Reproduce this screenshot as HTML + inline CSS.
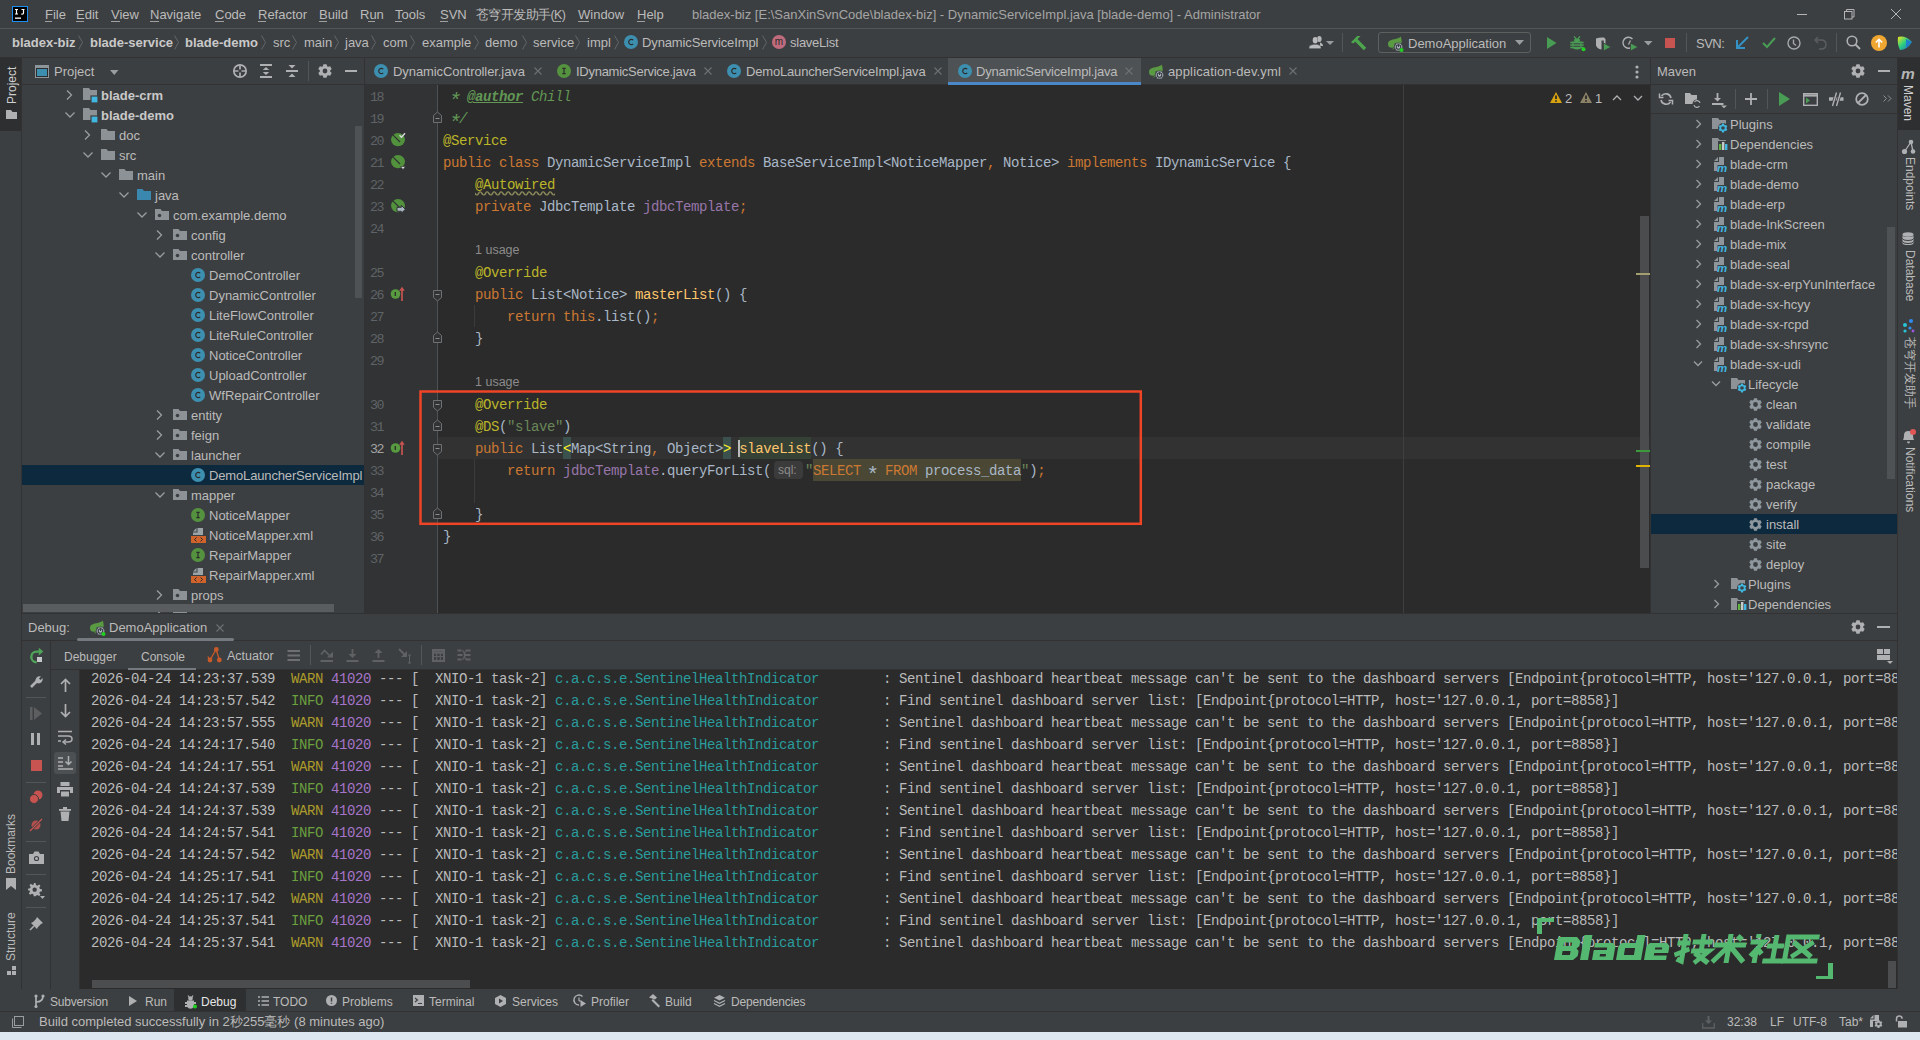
<!DOCTYPE html>
<html><head><meta charset="utf-8"><style>
html,body{margin:0;padding:0;width:1920px;height:1040px;overflow:hidden;background:#3c3f41;}
body div, body span, body svg{position:absolute;}
span{white-space:pre;line-height:1;}
svg{overflow:visible;}
</style></head><body>
<div style="left:0px;top:0px;width:1920px;height:1040px;background:#3c3f41;"></div>
<div style="left:0px;top:28px;width:1920px;height:1px;background:#515658;"></div>
<svg style="left:12px;top:6px;" width="16" height="16" viewBox="0 0 16 16"><rect x="0.5" y="0.5" width="15" height="15" fill="#000" stroke="#1d8ef0" stroke-width="1"/><path d="M3 3.5h3M4.5 3.5v4.5M3 8h3" stroke="#fff" stroke-width="1.2" fill="none"/><path d="M9.5 3.5h3M11.5 3.5v3.5q0 1.2-1.2 1.2h-1" stroke="#fff" stroke-width="1.2" fill="none"/><rect x="3" y="11.5" width="6" height="1.3" fill="#fff"/></svg>
<span style="left:45px;top:8.00px;font-family:'Liberation Sans', sans-serif;font-size:13px;color:#bbbbbb;">File</span>
<span style="left:76px;top:8.00px;font-family:'Liberation Sans', sans-serif;font-size:13px;color:#bbbbbb;">Edit</span>
<span style="left:111px;top:8.00px;font-family:'Liberation Sans', sans-serif;font-size:13px;color:#bbbbbb;">View</span>
<span style="left:150px;top:8.00px;font-family:'Liberation Sans', sans-serif;font-size:13px;color:#bbbbbb;">Navigate</span>
<span style="left:215px;top:8.00px;font-family:'Liberation Sans', sans-serif;font-size:13px;color:#bbbbbb;">Code</span>
<span style="left:258px;top:8.00px;font-family:'Liberation Sans', sans-serif;font-size:13px;color:#bbbbbb;">Refactor</span>
<span style="left:319px;top:8.00px;font-family:'Liberation Sans', sans-serif;font-size:13px;color:#bbbbbb;">Build</span>
<span style="left:360px;top:8.00px;font-family:'Liberation Sans', sans-serif;font-size:13px;color:#bbbbbb;">Run</span>
<span style="left:395px;top:8.00px;font-family:'Liberation Sans', sans-serif;font-size:13px;color:#bbbbbb;">Tools</span>
<span style="left:440px;top:8.00px;font-family:'Liberation Sans', sans-serif;font-size:13px;color:#bbbbbb;">SVN</span>
<div style="left:45px;top:21px;width:7px;height:1px;background:#a0a0a0;"></div>
<div style="left:76px;top:21px;width:8px;height:1px;background:#a0a0a0;"></div>
<div style="left:111px;top:21px;width:9px;height:1px;background:#a0a0a0;"></div>
<div style="left:150px;top:21px;width:9px;height:1px;background:#a0a0a0;"></div>
<div style="left:215px;top:21px;width:9px;height:1px;background:#a0a0a0;"></div>
<div style="left:258px;top:21px;width:8px;height:1px;background:#a0a0a0;"></div>
<div style="left:319px;top:21px;width:8px;height:1px;background:#a0a0a0;"></div>
<div style="left:368px;top:21px;width:7px;height:1px;background:#a0a0a0;"></div>
<div style="left:395px;top:21px;width:7px;height:1px;background:#a0a0a0;"></div>
<div style="left:440px;top:21px;width:8px;height:1px;background:#a0a0a0;"></div>
<span style="left:476px;top:9.42px;font-family:'Liberation Sans', sans-serif;font-size:12.5px;color:#bbbbbb;letter-spacing:-0.6px;">苍穹开发助手(K)</span>
<div style="left:553px;top:21px;width:8px;height:1px;background:#a0a0a0;"></div>
<span style="left:578px;top:8.00px;font-family:'Liberation Sans', sans-serif;font-size:13px;color:#bbbbbb;">Window</span>
<div style="left:578px;top:21px;width:11px;height:1px;background:#a0a0a0;"></div>
<span style="left:637px;top:8.00px;font-family:'Liberation Sans', sans-serif;font-size:13px;color:#bbbbbb;">Help</span>
<div style="left:637px;top:21px;width:8px;height:1px;background:#a0a0a0;"></div>
<span style="left:692px;top:8.00px;font-family:'Liberation Sans', sans-serif;font-size:13px;color:#a5a5a5;">bladex-biz [E:\SanXinSvnCode\bladex-biz] - DynamicServiceImpl.java [blade-demo] - Administrator</span>
<div style="left:1797px;top:14px;width:10px;height:1px;background:#b5b5b5;"></div>
<svg style="left:1843px;top:8px;" width="12" height="12" viewBox="0 0 12 12"><rect x="1.5" y="3.5" width="7.5" height="7.5" fill="none" stroke="#b5b5b5"/><path d="M3.5 3.5v-2h7.5v7.5h-2" fill="none" stroke="#b5b5b5"/></svg>
<svg style="left:1890px;top:8px;" width="12" height="12" viewBox="0 0 12 12"><path d="M1 1L11 11M11 1L1 11" stroke="#b5b5b5" stroke-width="1"/></svg>
<div style="left:0px;top:57px;width:1920px;height:1px;background:#323232;"></div>
<span style="left:12px;top:36.00px;font-family:'Liberation Sans', sans-serif;font-size:13px;color:#c9c9c9;font-weight:bold;">bladex-biz</span>
<span style="left:90px;top:36.00px;font-family:'Liberation Sans', sans-serif;font-size:13px;color:#c9c9c9;font-weight:bold;">blade-service</span>
<span style="left:185px;top:36.00px;font-family:'Liberation Sans', sans-serif;font-size:13px;color:#c9c9c9;font-weight:bold;">blade-demo</span>
<span style="left:273px;top:36.00px;font-family:'Liberation Sans', sans-serif;font-size:13px;color:#bbbbbb;">src</span>
<span style="left:304px;top:36.00px;font-family:'Liberation Sans', sans-serif;font-size:13px;color:#bbbbbb;">main</span>
<span style="left:345px;top:36.00px;font-family:'Liberation Sans', sans-serif;font-size:13px;color:#bbbbbb;">java</span>
<span style="left:383px;top:36.00px;font-family:'Liberation Sans', sans-serif;font-size:13px;color:#bbbbbb;">com</span>
<span style="left:422px;top:36.00px;font-family:'Liberation Sans', sans-serif;font-size:13px;color:#bbbbbb;">example</span>
<span style="left:485px;top:36.00px;font-family:'Liberation Sans', sans-serif;font-size:13px;color:#bbbbbb;">demo</span>
<span style="left:533px;top:36.00px;font-family:'Liberation Sans', sans-serif;font-size:13px;color:#bbbbbb;">service</span>
<span style="left:587px;top:36.00px;font-family:'Liberation Sans', sans-serif;font-size:13px;color:#bbbbbb;">impl</span>
<svg style="left:78px;top:35px;" width="6" height="16" viewBox="0 0 6 16"><path d="M0.5 0.5L4.5 7.5L0.5 14.5" stroke="#62666a" fill="none" stroke-width="1"/></svg>
<svg style="left:174px;top:35px;" width="6" height="16" viewBox="0 0 6 16"><path d="M0.5 0.5L4.5 7.5L0.5 14.5" stroke="#62666a" fill="none" stroke-width="1"/></svg>
<svg style="left:261px;top:35px;" width="6" height="16" viewBox="0 0 6 16"><path d="M0.5 0.5L4.5 7.5L0.5 14.5" stroke="#62666a" fill="none" stroke-width="1"/></svg>
<svg style="left:292px;top:35px;" width="6" height="16" viewBox="0 0 6 16"><path d="M0.5 0.5L4.5 7.5L0.5 14.5" stroke="#62666a" fill="none" stroke-width="1"/></svg>
<svg style="left:334px;top:35px;" width="6" height="16" viewBox="0 0 6 16"><path d="M0.5 0.5L4.5 7.5L0.5 14.5" stroke="#62666a" fill="none" stroke-width="1"/></svg>
<svg style="left:371px;top:35px;" width="6" height="16" viewBox="0 0 6 16"><path d="M0.5 0.5L4.5 7.5L0.5 14.5" stroke="#62666a" fill="none" stroke-width="1"/></svg>
<svg style="left:410px;top:35px;" width="6" height="16" viewBox="0 0 6 16"><path d="M0.5 0.5L4.5 7.5L0.5 14.5" stroke="#62666a" fill="none" stroke-width="1"/></svg>
<svg style="left:474px;top:35px;" width="6" height="16" viewBox="0 0 6 16"><path d="M0.5 0.5L4.5 7.5L0.5 14.5" stroke="#62666a" fill="none" stroke-width="1"/></svg>
<svg style="left:522px;top:35px;" width="6" height="16" viewBox="0 0 6 16"><path d="M0.5 0.5L4.5 7.5L0.5 14.5" stroke="#62666a" fill="none" stroke-width="1"/></svg>
<svg style="left:575px;top:35px;" width="6" height="16" viewBox="0 0 6 16"><path d="M0.5 0.5L4.5 7.5L0.5 14.5" stroke="#62666a" fill="none" stroke-width="1"/></svg>
<svg style="left:614px;top:35px;" width="6" height="16" viewBox="0 0 6 16"><path d="M0.5 0.5L4.5 7.5L0.5 14.5" stroke="#62666a" fill="none" stroke-width="1"/></svg>
<svg style="left:762px;top:35px;" width="6" height="16" viewBox="0 0 6 16"><path d="M0.5 0.5L4.5 7.5L0.5 14.5" stroke="#62666a" fill="none" stroke-width="1"/></svg>
<svg style="left:624px;top:35px;" width="14" height="14" viewBox="0 0 14 14"><circle cx="7" cy="7" r="7" fill="#3d8fb0"/><path d="M9.2 5.2A2.6 2.6 0 1 0 9.2 8.8" stroke="#2b2b2b" stroke-width="1.2" fill="none"/></svg>
<span style="left:642px;top:36.00px;font-family:'Liberation Sans', sans-serif;font-size:13px;color:#bbbbbb;letter-spacing:-0.12px;">DynamicServiceImpl</span>
<svg style="left:772px;top:35px;" width="14" height="14" viewBox="0 0 14 14"><circle cx="7" cy="7" r="7" fill="#c06b7d"/><text x="7" y="10.3" text-anchor="middle" font-family="Liberation Sans" font-size="10" fill="#2b2b2b">m</text></svg>
<span style="left:790px;top:36.00px;font-family:'Liberation Sans', sans-serif;font-size:13px;color:#bbbbbb;letter-spacing:-0.25px;">slaveList</span>
<svg style="left:1308px;top:35px;" width="17" height="15" viewBox="0 0 17 15"><ellipse cx="11.3" cy="4" rx="2.3" ry="3" fill="#b4b6b8"/><path d="M12 7.5Q15 8.5 15 11L12 11z" fill="#b4b6b8"/><ellipse cx="7.2" cy="5.5" rx="2.8" ry="3.4" fill="#3c3f41"/><ellipse cx="7.2" cy="5.3" rx="2.5" ry="3.2" fill="#b9bbbd"/><path d="M1 13.8V12Q1 10 5.5 9.3H9Q13 10 13 12V13.8Z" fill="#b9bbbd" stroke="#3c3f41" stroke-width="0.6"/></svg>
<svg style="left:1326px;top:41px;" width="8" height="5" viewBox="0 0 8 5"><path d="M0 0h8L4 4z" fill="#9a9da0"/></svg>
<div style="left:1342px;top:33px;width:1px;height:19px;background:#515658;"></div>
<svg style="left:1350px;top:34px;" width="17" height="17" viewBox="0 0 17 17"><path d="M1 8.2L7.2 2H10.5L3.3 9.5Z" fill="#4da64d"/><path d="M5.5 5.5L15 15" stroke="#4da64d" stroke-width="3.3"/></svg>
<div style="left:1378px;top:32px;width:153px;height:21px;border:1px solid #5e6060;border-radius:3px;box-sizing:border-box;"></div>
<svg style="left:1388px;top:36px;" width="16" height="16" viewBox="0 0 16 16"><path d="M0 8C0 4.5 3.5 3.5 7.5 3C10 2.6 11.5 1.8 12.6 0.5C13.6 2.5 13.8 5 13.6 7H6.8L5.8 11.6C2.5 12.2 0 11.5 0 8Z" fill="#5a9a43"/><path d="M3.5 13.5L6 11.8L6.3 13z" fill="#4f8a3b"/><path d="M15 11L12.75 14.9H8.25L6 11L8.25 7.1H12.75Z" fill="#a9b4bd" stroke="#3c3f41" stroke-width="0.8"/><circle cx="10.5" cy="11" r="2.3" fill="none" stroke="#3a3d40" stroke-width="1.1"/><path d="M10.5 8.3V11" stroke="#3a3d40" stroke-width="1.1"/><circle cx="13.5" cy="14" r="2" fill="#21d121"/></svg>
<span style="left:1408px;top:37.00px;font-family:'Liberation Sans', sans-serif;font-size:13px;color:#bbbbbb;">DemoApplication</span>
<svg style="left:1515px;top:40px;" width="9" height="6" viewBox="0 0 9 6"><path d="M0 0h9L4.5 5z" fill="#9a9da0"/></svg>
<svg style="left:1547px;top:37px;" width="10" height="12" viewBox="0 0 10 12"><path d="M0 0L9.5 6L0 12z" fill="#499c54"/></svg>
<svg style="left:1570px;top:36px;" width="16" height="16" viewBox="0 0 16 16"><path d="M4 0.5L6.3 3M10 0.5L7.7 3" stroke="#499c54" stroke-width="1.3"/><ellipse cx="7" cy="4.2" rx="3" ry="1.8" fill="#499c54"/><path d="M2.5 5.5H11.5V10.5Q11.5 13.5 7 13.5Q2.5 13.5 2.5 10.5Z" fill="#499c54"/><path d="M0.3 6.5H13.7M0.3 9H13.7M0.3 11.5H13.7" stroke="#499c54" stroke-width="1.3"/><path d="M3.5 7.8H10.5M3.5 10.3H10.5" stroke="#3c3f41" stroke-width="1"/><circle cx="13.5" cy="13.3" r="2" fill="#21d121"/></svg>
<svg style="left:1595px;top:37px;" width="17" height="15" viewBox="0 0 17 15"><path d="M1 1.5Q5 0 9 0.5L10.5 2V7.5Q10.5 11 6 12.5Q1 11 1 7.5Z" fill="#aeb0b2"/><path d="M6.5 3.5H8.8V12L6.5 12.8Z" fill="#3c3f41"/><path d="M8.5 6L16 10L8.5 14Z" fill="#499c54" stroke="#3c3f41" stroke-width="0.8"/></svg>
<svg style="left:1622px;top:36px;" width="18" height="16" viewBox="0 0 18 16"><path d="M11.5 9A5.5 5.5 0 1 1 10.5 3" stroke="#aeb0b2" stroke-width="1.4" fill="none"/><path d="M6.5 8.5L8.5 4.5" stroke="#aeb0b2" stroke-width="1.2"/><path d="M8.5 7L16 11L8.5 15Z" fill="#499c54" stroke="#3c3f41" stroke-width="0.8"/></svg>
<svg style="left:1644px;top:41px;" width="9" height="6" viewBox="0 0 9 6"><path d="M0 0h8.5L4.25 4.5z" fill="#9a9da0"/></svg>
<div style="left:1665px;top:38px;width:10px;height:10px;background:#c75450;"></div>
<div style="left:1686px;top:33px;width:1px;height:19px;background:#515658;"></div>
<span style="left:1696px;top:37.00px;font-family:'Liberation Sans', sans-serif;font-size:13px;color:#bbbbbb;letter-spacing:-0.5px;">SVN:</span>
<svg style="left:1736px;top:36px;" width="13" height="13" viewBox="0 0 13 13"><path d="M12 1L2 11" stroke="#3592c4" stroke-width="2"/><path d="M1 4v8h8" stroke="#3592c4" stroke-width="2" fill="none"/></svg>
<svg style="left:1762px;top:37px;" width="14" height="11" viewBox="0 0 14 11"><path d="M1 6l4 4l8-9" stroke="#499c54" stroke-width="2" fill="none"/></svg>
<svg style="left:1787px;top:36px;" width="14" height="14" viewBox="0 0 14 14"><circle cx="7" cy="7" r="6" fill="none" stroke="#a6a8aa" stroke-width="1.4"/><path d="M6.5 3.5v4l2.5 2" stroke="#a6a8aa" stroke-width="1.4" fill="none"/></svg>
<svg style="left:1814px;top:36px;" width="13" height="13" viewBox="0 0 13 13"><path d="M4 1L1 4l3 3" stroke="#5c5e60" stroke-width="1.4" fill="none"/><path d="M1 4h6q5 0 5 4.5q0 4.5-5 4.5h-2" stroke="#5c5e60" stroke-width="1.4" fill="none"/></svg>
<div style="left:1836px;top:33px;width:1px;height:19px;background:#515658;"></div>
<svg style="left:1846px;top:35px;" width="15" height="15" viewBox="0 0 15 15"><circle cx="6" cy="6" r="4.8" fill="none" stroke="#aeb0b2" stroke-width="1.6"/><path d="M9.5 9.5l4.5 4.5" stroke="#aeb0b2" stroke-width="1.8"/></svg>
<svg style="left:1871px;top:35px;" width="17" height="17" viewBox="0 0 17 17"><circle cx="8" cy="8" r="8" fill="#f0a732"/><path d="M8 12.5V4.5M4.8 7.5L8 4.3l3.2 3.2" stroke="#fff" stroke-width="1.6" fill="none"/></svg>
<svg style="left:1897px;top:35px;" width="16" height="16" viewBox="0 0 16 16"><defs><linearGradient id="cg" x1="0" y1="0" x2="1" y2="1"><stop offset="0" stop-color="#f7e51b"/><stop offset="0.45" stop-color="#2ed07e"/><stop offset="1" stop-color="#1a63d8"/></linearGradient></defs><path d="M1 2Q8 0 15 7Q10 15 3 15Q0 9 1 2z" fill="url(#cg)"/><path d="M9 4L15 7L9 13z" fill="#1e6fd9" opacity="0.8"/></svg>
<div style="left:21px;top:57px;width:1px;height:932px;background:#323232;"></div>
<div style="left:0px;top:58px;width:21px;height:73px;background:#2d2f30;"></div>
<span style="left:6px;top:104px;font-family:'Liberation Sans', sans-serif;font-size:12px;color:#d0d0d0;transform:rotate(-90deg);transform-origin:0 0;">Project</span>
<svg style="left:6px;top:110px;" width="11" height="9" viewBox="0 0 11 9"><path d="M0 0h5l1.5 2H11v7H0z" fill="#aeb0b2"/></svg>
<span style="left:5px;top:874px;font-family:'Liberation Sans', sans-serif;font-size:12px;color:#bbbbbb;transform:rotate(-90deg);transform-origin:0 0;">Bookmarks</span>
<svg style="left:6px;top:878px;" width="10" height="12" viewBox="0 0 10 12"><path d="M0 0h10v12L5 8L0 12z" fill="#aeb0b2"/></svg>
<span style="left:5px;top:961px;font-family:'Liberation Sans', sans-serif;font-size:12px;color:#bbbbbb;transform:rotate(-90deg);transform-origin:0 0;">Structure</span>
<svg style="left:7px;top:966px;" width="11" height="11" viewBox="0 0 11 11"><rect x="5" y="0" width="4" height="4" fill="#aeb0b2"/><rect x="0" y="5" width="4" height="4" fill="#aeb0b2"/><rect x="5" y="5" width="4" height="4" fill="#aeb0b2"/></svg>
<div style="left:1897px;top:57px;width:1px;height:932px;background:#323232;"></div>
<div style="left:1898px;top:58px;width:22px;height:72px;background:#2d2f30;"></div>
<span style="left:1914px;top:85px;font-family:'Liberation Sans', sans-serif;font-size:12px;color:#d0d0d0;transform:rotate(90deg);transform-origin:0 0;">Maven</span>
<span style="left:1901px;top:65.88px;font-family:'Liberation Sans', sans-serif;font-size:15.5px;color:#b4b4b4;font-weight:bold;font-style:italic;">m</span>
<svg style="left:1901px;top:139px;" width="15" height="16" viewBox="0 0 15 16"><path d="M10 3L3.5 12.5M10 3L12 12.5" stroke="#aeb0b2" stroke-width="1.3"/><circle cx="10" cy="3" r="2.3" fill="#aeb0b2"/><circle cx="3.5" cy="12.5" r="2.6" fill="#aeb0b2"/><circle cx="12" cy="12.5" r="2.3" fill="#aeb0b2"/></svg>
<span style="left:1916px;top:157px;font-family:'Liberation Sans', sans-serif;font-size:12px;color:#bbbbbb;transform:rotate(90deg);transform-origin:0 0;">Endpoints</span>
<svg style="left:1902px;top:232px;" width="12" height="13" viewBox="0 0 12 13"><ellipse cx="6" cy="2.5" rx="5.5" ry="2.3" fill="#aeb0b2"/><path d="M0.5 3v8q0 2 5.5 2q5.5 0 5.5-2V3q0 2-5.5 2q-5.5 0-5.5-2z" fill="#aeb0b2"/><path d="M0.5 6.5q0 2 5.5 2q5.5 0 5.5-2M0.5 9.5q0 2 5.5 2q5.5 0 5.5-2" stroke="#3c3f41" fill="none"/></svg>
<span style="left:1916px;top:250px;font-family:'Liberation Sans', sans-serif;font-size:12px;color:#bbbbbb;transform:rotate(90deg);transform-origin:0 0;">Database</span>
<svg style="left:1901px;top:319px;" width="14" height="14" viewBox="0 0 14 14"><circle cx="10" cy="2" r="2" fill="#2f8cf0"/><circle cx="4" cy="6" r="2" fill="#27c3d6"/><circle cx="9" cy="9" r="1.6" fill="#2f8cf0"/><circle cx="4" cy="12" r="1.6" fill="#27c3d6"/><circle cx="12" cy="12" r="1.4" fill="#a056e0"/></svg>
<span style="left:1916px;top:337px;font-family:'Liberation Sans', sans-serif;font-size:12px;color:#bbbbbb;transform:rotate(90deg);transform-origin:0 0;">苍穹开发助手</span>
<svg style="left:1901px;top:429px;" width="15" height="15" viewBox="0 0 15 15"><path d="M2 11q1-1 1-5q0-4 4.5-4q4.5 0 4.5 4q0 4 1 5z" fill="#aeb0b2"/><path d="M6 12.5h3q0 2-1.5 2q-1.5 0-1.5-2z" fill="#aeb0b2"/><circle cx="12" cy="3" r="3" fill="#e05555"/></svg>
<span style="left:1916px;top:447px;font-family:'Liberation Sans', sans-serif;font-size:12px;color:#bbbbbb;transform:rotate(90deg);transform-origin:0 0;">Notifications</span>
<div style="left:364px;top:57px;width:1px;height:557px;background:#323232;"></div>
<div style="left:22px;top:84px;width:342px;height:1px;background:#323232;"></div>
<svg style="left:35px;top:65px;" width="14" height="13" viewBox="0 0 14 13"><rect x="0" y="0" width="14" height="13" fill="#8b959a"/><rect x="1" y="3" width="12" height="9" fill="#2b2d2e"/><rect x="2" y="4" width="10" height="7" fill="#3d8fb0"/></svg>
<span style="left:54px;top:65.00px;font-family:'Liberation Sans', sans-serif;font-size:13px;color:#bbbbbb;">Project</span>
<svg style="left:110px;top:70px;" width="9" height="6" viewBox="0 0 9 6"><path d="M0 0h8.5L4.25 5z" fill="#9a9da0"/></svg>
<svg style="left:233px;top:64px;" width="15" height="15" viewBox="0 0 15 15"><circle cx="7" cy="7" r="6.2" fill="none" stroke="#aeb0b2" stroke-width="1.7"/><path d="M7 1v4.5M7 8.5V13M1 7h4.5M8.5 7H13" stroke="#aeb0b2" stroke-width="1.7"/></svg>
<svg style="left:260px;top:64px;" width="13" height="15" viewBox="0 0 13 15"><path d="M0 1h12M0 13h12" stroke="#aeb0b2" stroke-width="2"/><path d="M2.8 6L6 3L9.2 6zM2.8 8L6 11L9.2 8z" fill="#aeb0b2"/></svg>
<svg style="left:286px;top:64px;" width="13" height="14" viewBox="0 0 13 14"><path d="M0 7h12" stroke="#aeb0b2" stroke-width="2"/><path d="M2.5 1H9.5L6 4.5zM2.5 13H9.5L6 9.5z" fill="#aeb0b2"/></svg>
<div style="left:308px;top:61px;width:1px;height:20px;background:#515658;"></div>
<svg style="left:318px;top:64px;" width="14" height="14" viewBox="0 0 14 14"><path fill-rule="evenodd" d="M4.89 2.27L5.43 0.18L8.57 0.18L9.11 2.27L10.04 2.81L12.12 2.23L13.69 4.95L12.15 6.46L12.15 7.54L13.69 9.05L12.12 11.77L10.04 11.19L9.11 11.73L8.57 13.82L5.43 13.82L4.89 11.73L3.96 11.19L1.88 11.77L0.31 9.05L1.85 7.54L1.85 6.46L0.31 4.95L1.88 2.23L3.96 2.81Z M9.38 7.00A2.38 2.38 0 1 0 4.62 7.00A2.38 2.38 0 1 0 9.38 7.00Z" fill="#aeb0b2"/></svg>
<div style="left:345px;top:70px;width:12px;height:2px;background:#aeb0b2;"></div>
<div style="left:22px;top:85px;width:342px;height:528px;overflow:hidden;">
<svg style="left:44px;top:5px;" width="7" height="10" viewBox="0 0 7 10"><path d="M1 0.5L5.5 5L1 9.5" stroke="#9a9da0" stroke-width="1.3" fill="none"/></svg><svg style="left:61px;top:3px;" width="15" height="15" viewBox="0 0 15 15"><path d="M0 0h6l1.5 2H14v10H0z" fill="#8d9296"/><rect x="8" y="8" width="7" height="7" fill="#40b6e0" stroke="#3c3f41" stroke-width="1.2"/></svg><span style="left:79px;top:4.00px;font-family:'Liberation Sans', sans-serif;font-size:13px;color:#c9c9c9;font-weight:bold;">blade-crm</span><svg style="left:43px;top:27px;" width="10" height="6" viewBox="0 0 10 6"><path d="M0.5 0.5L5 5L9.5 0.5" stroke="#9a9da0" stroke-width="1.3" fill="none"/></svg><svg style="left:61px;top:23px;" width="15" height="15" viewBox="0 0 15 15"><path d="M0 0h6l1.5 2H14v10H0z" fill="#8d9296"/><rect x="8" y="8" width="7" height="7" fill="#40b6e0" stroke="#3c3f41" stroke-width="1.2"/></svg><span style="left:79px;top:24.00px;font-family:'Liberation Sans', sans-serif;font-size:13px;color:#c9c9c9;font-weight:bold;">blade-demo</span><svg style="left:62px;top:45px;" width="7" height="10" viewBox="0 0 7 10"><path d="M1 0.5L5.5 5L1 9.5" stroke="#9a9da0" stroke-width="1.3" fill="none"/></svg><svg style="left:79px;top:44px;" width="15" height="12" viewBox="0 0 15 12"><path d="M0 0h5.5l1.5 2H14v9H0z" fill="#8d9296"/></svg><span style="left:97px;top:44.00px;font-family:'Liberation Sans', sans-serif;font-size:13px;color:#bbbbbb;">doc</span><svg style="left:61px;top:67px;" width="10" height="6" viewBox="0 0 10 6"><path d="M0.5 0.5L5 5L9.5 0.5" stroke="#9a9da0" stroke-width="1.3" fill="none"/></svg><svg style="left:79px;top:64px;" width="15" height="12" viewBox="0 0 15 12"><path d="M0 0h5.5l1.5 2H14v9H0z" fill="#8d9296"/></svg><span style="left:97px;top:64.00px;font-family:'Liberation Sans', sans-serif;font-size:13px;color:#bbbbbb;">src</span><svg style="left:79px;top:87px;" width="10" height="6" viewBox="0 0 10 6"><path d="M0.5 0.5L5 5L9.5 0.5" stroke="#9a9da0" stroke-width="1.3" fill="none"/></svg><svg style="left:97px;top:84px;" width="15" height="12" viewBox="0 0 15 12"><path d="M0 0h5.5l1.5 2H14v9H0z" fill="#8d9296"/></svg><span style="left:115px;top:84.00px;font-family:'Liberation Sans', sans-serif;font-size:13px;color:#bbbbbb;">main</span><svg style="left:97px;top:107px;" width="10" height="6" viewBox="0 0 10 6"><path d="M0.5 0.5L5 5L9.5 0.5" stroke="#9a9da0" stroke-width="1.3" fill="none"/></svg><svg style="left:115px;top:104px;" width="15" height="12" viewBox="0 0 15 12"><path d="M0 0h5.5l1.5 2H14v9H0z" fill="#3a87b0"/></svg><span style="left:133px;top:104.00px;font-family:'Liberation Sans', sans-serif;font-size:13px;color:#bbbbbb;">java</span><svg style="left:115px;top:127px;" width="10" height="6" viewBox="0 0 10 6"><path d="M0.5 0.5L5 5L9.5 0.5" stroke="#9a9da0" stroke-width="1.3" fill="none"/></svg><svg style="left:133px;top:124px;" width="15" height="12" viewBox="0 0 15 12"><path d="M0 0h5.5l1.5 2H14v9H0z" fill="#8d9296"/><circle cx="4.5" cy="6.5" r="1.8" fill="#3c3f41"/></svg><span style="left:151px;top:124.00px;font-family:'Liberation Sans', sans-serif;font-size:13px;color:#bbbbbb;">com.example.demo</span><svg style="left:134px;top:145px;" width="7" height="10" viewBox="0 0 7 10"><path d="M1 0.5L5.5 5L1 9.5" stroke="#9a9da0" stroke-width="1.3" fill="none"/></svg><svg style="left:151px;top:144px;" width="15" height="12" viewBox="0 0 15 12"><path d="M0 0h5.5l1.5 2H14v9H0z" fill="#8d9296"/><circle cx="4.5" cy="6.5" r="1.8" fill="#3c3f41"/></svg><span style="left:169px;top:144.00px;font-family:'Liberation Sans', sans-serif;font-size:13px;color:#bbbbbb;">config</span><svg style="left:133px;top:167px;" width="10" height="6" viewBox="0 0 10 6"><path d="M0.5 0.5L5 5L9.5 0.5" stroke="#9a9da0" stroke-width="1.3" fill="none"/></svg><svg style="left:151px;top:164px;" width="15" height="12" viewBox="0 0 15 12"><path d="M0 0h5.5l1.5 2H14v9H0z" fill="#8d9296"/><circle cx="4.5" cy="6.5" r="1.8" fill="#3c3f41"/></svg><span style="left:169px;top:164.00px;font-family:'Liberation Sans', sans-serif;font-size:13px;color:#bbbbbb;">controller</span><svg style="left:169px;top:183px;" width="14" height="14" viewBox="0 0 14 14"><circle cx="7" cy="7" r="7" fill="#3d8fb0"/><path d="M9.2 5.2A2.6 2.6 0 1 0 9.2 8.8" stroke="#2b2b2b" stroke-width="1.2" fill="none"/></svg><span style="left:187px;top:184.00px;font-family:'Liberation Sans', sans-serif;font-size:13px;color:#bbbbbb;">DemoController</span><svg style="left:169px;top:203px;" width="14" height="14" viewBox="0 0 14 14"><circle cx="7" cy="7" r="7" fill="#3d8fb0"/><path d="M9.2 5.2A2.6 2.6 0 1 0 9.2 8.8" stroke="#2b2b2b" stroke-width="1.2" fill="none"/></svg><span style="left:187px;top:204.00px;font-family:'Liberation Sans', sans-serif;font-size:13px;color:#bbbbbb;">DynamicController</span><svg style="left:169px;top:223px;" width="14" height="14" viewBox="0 0 14 14"><circle cx="7" cy="7" r="7" fill="#3d8fb0"/><path d="M9.2 5.2A2.6 2.6 0 1 0 9.2 8.8" stroke="#2b2b2b" stroke-width="1.2" fill="none"/></svg><span style="left:187px;top:224.00px;font-family:'Liberation Sans', sans-serif;font-size:13px;color:#bbbbbb;">LiteFlowController</span><svg style="left:169px;top:243px;" width="14" height="14" viewBox="0 0 14 14"><circle cx="7" cy="7" r="7" fill="#3d8fb0"/><path d="M9.2 5.2A2.6 2.6 0 1 0 9.2 8.8" stroke="#2b2b2b" stroke-width="1.2" fill="none"/></svg><span style="left:187px;top:244.00px;font-family:'Liberation Sans', sans-serif;font-size:13px;color:#bbbbbb;">LiteRuleController</span><svg style="left:169px;top:263px;" width="14" height="14" viewBox="0 0 14 14"><circle cx="7" cy="7" r="7" fill="#3d8fb0"/><path d="M9.2 5.2A2.6 2.6 0 1 0 9.2 8.8" stroke="#2b2b2b" stroke-width="1.2" fill="none"/></svg><span style="left:187px;top:264.00px;font-family:'Liberation Sans', sans-serif;font-size:13px;color:#bbbbbb;">NoticeController</span><svg style="left:169px;top:283px;" width="14" height="14" viewBox="0 0 14 14"><circle cx="7" cy="7" r="7" fill="#3d8fb0"/><path d="M9.2 5.2A2.6 2.6 0 1 0 9.2 8.8" stroke="#2b2b2b" stroke-width="1.2" fill="none"/></svg><span style="left:187px;top:284.00px;font-family:'Liberation Sans', sans-serif;font-size:13px;color:#bbbbbb;">UploadController</span><svg style="left:169px;top:303px;" width="14" height="14" viewBox="0 0 14 14"><circle cx="7" cy="7" r="7" fill="#3d8fb0"/><path d="M9.2 5.2A2.6 2.6 0 1 0 9.2 8.8" stroke="#2b2b2b" stroke-width="1.2" fill="none"/></svg><span style="left:187px;top:304.00px;font-family:'Liberation Sans', sans-serif;font-size:13px;color:#bbbbbb;">WfRepairController</span><svg style="left:134px;top:325px;" width="7" height="10" viewBox="0 0 7 10"><path d="M1 0.5L5.5 5L1 9.5" stroke="#9a9da0" stroke-width="1.3" fill="none"/></svg><svg style="left:151px;top:324px;" width="15" height="12" viewBox="0 0 15 12"><path d="M0 0h5.5l1.5 2H14v9H0z" fill="#8d9296"/><circle cx="4.5" cy="6.5" r="1.8" fill="#3c3f41"/></svg><span style="left:169px;top:324.00px;font-family:'Liberation Sans', sans-serif;font-size:13px;color:#bbbbbb;">entity</span><svg style="left:134px;top:345px;" width="7" height="10" viewBox="0 0 7 10"><path d="M1 0.5L5.5 5L1 9.5" stroke="#9a9da0" stroke-width="1.3" fill="none"/></svg><svg style="left:151px;top:344px;" width="15" height="12" viewBox="0 0 15 12"><path d="M0 0h5.5l1.5 2H14v9H0z" fill="#8d9296"/><circle cx="4.5" cy="6.5" r="1.8" fill="#3c3f41"/></svg><span style="left:169px;top:344.00px;font-family:'Liberation Sans', sans-serif;font-size:13px;color:#bbbbbb;">feign</span><svg style="left:133px;top:367px;" width="10" height="6" viewBox="0 0 10 6"><path d="M0.5 0.5L5 5L9.5 0.5" stroke="#9a9da0" stroke-width="1.3" fill="none"/></svg><svg style="left:151px;top:364px;" width="15" height="12" viewBox="0 0 15 12"><path d="M0 0h5.5l1.5 2H14v9H0z" fill="#8d9296"/><circle cx="4.5" cy="6.5" r="1.8" fill="#3c3f41"/></svg><span style="left:169px;top:364.00px;font-family:'Liberation Sans', sans-serif;font-size:13px;color:#bbbbbb;">launcher</span><div style="left:0px;top:380px;width:342px;height:20px;background:#0d293e;"></div><svg style="left:169px;top:383px;" width="14" height="14" viewBox="0 0 14 14"><circle cx="7" cy="7" r="7" fill="#3d8fb0"/><path d="M9.2 5.2A2.6 2.6 0 1 0 9.2 8.8" stroke="#2b2b2b" stroke-width="1.2" fill="none"/></svg><span style="left:187px;top:384.00px;font-family:'Liberation Sans', sans-serif;font-size:13px;color:#bbbbbb;letter-spacing:-0.15px;">DemoLauncherServiceImpl</span><svg style="left:133px;top:407px;" width="10" height="6" viewBox="0 0 10 6"><path d="M0.5 0.5L5 5L9.5 0.5" stroke="#9a9da0" stroke-width="1.3" fill="none"/></svg><svg style="left:151px;top:404px;" width="15" height="12" viewBox="0 0 15 12"><path d="M0 0h5.5l1.5 2H14v9H0z" fill="#8d9296"/><circle cx="4.5" cy="6.5" r="1.8" fill="#3c3f41"/></svg><span style="left:169px;top:404.00px;font-family:'Liberation Sans', sans-serif;font-size:13px;color:#bbbbbb;">mapper</span><svg style="left:169px;top:423px;" width="14" height="14" viewBox="0 0 14 14"><circle cx="7" cy="7" r="7" fill="#55923f"/><path d="M5.3 4.3h3.4M7 4.3v5.4M5.3 9.7h3.4" stroke="#2b2b2b" stroke-width="1.2" fill="none"/></svg><span style="left:187px;top:424.00px;font-family:'Liberation Sans', sans-serif;font-size:13px;color:#bbbbbb;">NoticeMapper</span><svg style="left:169px;top:443px;" width="15" height="15" viewBox="0 0 15 15"><path d="M2 3.5L5.5 0V3.5z" fill="#9aa3a8"/><path d="M6.5 0H12V7H2V4.5H6.5z" fill="#9aa3a8"/><rect x="0" y="8" width="15" height="7" fill="#d0632b"/><path d="M5.5 9.5L3.5 11.5L5.5 13.5M9.5 9.5L11.5 11.5L9.5 13.5" stroke="#2b2b2b" stroke-width="1" fill="none"/></svg><span style="left:187px;top:444.00px;font-family:'Liberation Sans', sans-serif;font-size:13px;color:#bbbbbb;">NoticeMapper.xml</span><svg style="left:169px;top:463px;" width="14" height="14" viewBox="0 0 14 14"><circle cx="7" cy="7" r="7" fill="#55923f"/><path d="M5.3 4.3h3.4M7 4.3v5.4M5.3 9.7h3.4" stroke="#2b2b2b" stroke-width="1.2" fill="none"/></svg><span style="left:187px;top:464.00px;font-family:'Liberation Sans', sans-serif;font-size:13px;color:#bbbbbb;">RepairMapper</span><svg style="left:169px;top:483px;" width="15" height="15" viewBox="0 0 15 15"><path d="M2 3.5L5.5 0V3.5z" fill="#9aa3a8"/><path d="M6.5 0H12V7H2V4.5H6.5z" fill="#9aa3a8"/><rect x="0" y="8" width="15" height="7" fill="#d0632b"/><path d="M5.5 9.5L3.5 11.5L5.5 13.5M9.5 9.5L11.5 11.5L9.5 13.5" stroke="#2b2b2b" stroke-width="1" fill="none"/></svg><span style="left:187px;top:484.00px;font-family:'Liberation Sans', sans-serif;font-size:13px;color:#bbbbbb;">RepairMapper.xml</span><svg style="left:134px;top:505px;" width="7" height="10" viewBox="0 0 7 10"><path d="M1 0.5L5.5 5L1 9.5" stroke="#9a9da0" stroke-width="1.3" fill="none"/></svg><svg style="left:151px;top:504px;" width="15" height="12" viewBox="0 0 15 12"><path d="M0 0h5.5l1.5 2H14v9H0z" fill="#8d9296"/><circle cx="4.5" cy="6.5" r="1.8" fill="#3c3f41"/></svg><span style="left:169px;top:504.00px;font-family:'Liberation Sans', sans-serif;font-size:13px;color:#bbbbbb;">props</span><svg style="left:134px;top:525px;" width="7" height="10" viewBox="0 0 7 10"><path d="M1 0.5L5.5 5L1 9.5" stroke="#9a9da0" stroke-width="1.3" fill="none"/></svg><svg style="left:151px;top:524px;" width="15" height="12" viewBox="0 0 15 12"><path d="M0 0h5.5l1.5 2H14v9H0z" fill="#8d9296"/><circle cx="4.5" cy="6.5" r="1.8" fill="#3c3f41"/></svg><span style="left:169px;top:524.00px;font-family:'Liberation Sans', sans-serif;font-size:13px;color:#bbbbbb;">rpc</span><div style="left:333px;top:41px;width:7px;height:172px;background:#4f5254;border-radius:0"></div>
</div>
<div style="left:23px;top:604px;width:311px;height:8px;background:#5a5d5f;"></div>
<div style="left:22px;top:613px;width:1876px;height:1px;background:#323232;"></div>
<div style="left:1650px;top:57px;width:1px;height:557px;background:#323232;"></div>
<div style="left:365px;top:84px;width:1285px;height:1px;background:#323232;"></div>
<div style="left:948px;top:58px;width:193px;height:24px;background:#4e5254;"></div>
<div style="left:948px;top:82px;width:193px;height:3px;background:#4a88c7;"></div>
<svg style="left:374px;top:64px;" width="14" height="14" viewBox="0 0 14 14"><circle cx="7" cy="7" r="7" fill="#3d8fb0"/><path d="M9.2 5.2A2.6 2.6 0 1 0 9.2 8.8" stroke="#2b2b2b" stroke-width="1.2" fill="none"/></svg>
<span style="left:393px;top:65.00px;font-family:'Liberation Sans', sans-serif;font-size:13px;color:#bbbbbb;letter-spacing:-0.08px;">DynamicController.java</span>
<svg style="left:534px;top:67px;" width="8" height="8" viewBox="0 0 8 8"><path d="M0.5 0.5L7.5 7.5M7.5 0.5L0.5 7.5" stroke="#6e7173" stroke-width="1.1"/></svg>
<svg style="left:557px;top:64px;" width="14" height="14" viewBox="0 0 14 14"><circle cx="7" cy="7" r="7" fill="#55923f"/><path d="M5.3 4.3h3.4M7 4.3v5.4M5.3 9.7h3.4" stroke="#2b2b2b" stroke-width="1.2" fill="none"/></svg>
<span style="left:576px;top:65.00px;font-family:'Liberation Sans', sans-serif;font-size:13px;color:#bbbbbb;letter-spacing:-0.27px;">IDynamicService.java</span>
<svg style="left:704px;top:67px;" width="8" height="8" viewBox="0 0 8 8"><path d="M0.5 0.5L7.5 7.5M7.5 0.5L0.5 7.5" stroke="#6e7173" stroke-width="1.1"/></svg>
<svg style="left:727px;top:64px;" width="14" height="14" viewBox="0 0 14 14"><circle cx="7" cy="7" r="7" fill="#3d8fb0"/><path d="M9.2 5.2A2.6 2.6 0 1 0 9.2 8.8" stroke="#2b2b2b" stroke-width="1.2" fill="none"/></svg>
<span style="left:746px;top:65.00px;font-family:'Liberation Sans', sans-serif;font-size:13px;color:#bbbbbb;letter-spacing:-0.17px;">DemoLauncherServiceImpl.java</span>
<svg style="left:934px;top:67px;" width="8" height="8" viewBox="0 0 8 8"><path d="M0.5 0.5L7.5 7.5M7.5 0.5L0.5 7.5" stroke="#6e7173" stroke-width="1.1"/></svg>
<svg style="left:958px;top:64px;" width="14" height="14" viewBox="0 0 14 14"><circle cx="7" cy="7" r="7" fill="#3d8fb0"/><path d="M9.2 5.2A2.6 2.6 0 1 0 9.2 8.8" stroke="#2b2b2b" stroke-width="1.2" fill="none"/></svg>
<span style="left:976px;top:65.00px;font-family:'Liberation Sans', sans-serif;font-size:13px;color:#bbbbbb;letter-spacing:-0.2px;">DynamicServiceImpl.java</span>
<svg style="left:1125px;top:67px;" width="8" height="8" viewBox="0 0 8 8"><path d="M0.5 0.5L7.5 7.5M7.5 0.5L0.5 7.5" stroke="#6e7173" stroke-width="1.1"/></svg>
<svg style="left:1149px;top:64px;" width="16" height="16" viewBox="0 0 16 16"><path d="M0 8C0 4.5 3.5 3.5 7.5 3C10 2.6 11.5 1.8 12.6 0.5C13.6 2.5 13.8 5 13.6 7H6.8L5.8 11.6C2.5 12.2 0 11.5 0 8Z" fill="#5a9a43"/><path d="M3.5 13.5L6 11.8L6.3 13z" fill="#4f8a3b"/><path d="M15 11L12.75 14.9H8.25L6 11L8.25 7.1H12.75Z" fill="#a9b4bd" stroke="#3c3f41" stroke-width="0.8"/><circle cx="10.5" cy="11" r="2.3" fill="none" stroke="#3a3d40" stroke-width="1.1"/><path d="M10.5 8.3V11" stroke="#3a3d40" stroke-width="1.1"/></svg>
<span style="left:1168px;top:65.00px;font-family:'Liberation Sans', sans-serif;font-size:13px;color:#bbbbbb;letter-spacing:0.14px;">application-dev.yml</span>
<svg style="left:1289px;top:67px;" width="8" height="8" viewBox="0 0 8 8"><path d="M0.5 0.5L7.5 7.5M7.5 0.5L0.5 7.5" stroke="#6e7173" stroke-width="1.1"/></svg>
<svg style="left:1635px;top:65px;" width="4" height="4" viewBox="0 0 4 4"><circle cx="2" cy="2" r="1.6" fill="#aeb0b2"/></svg>
<svg style="left:1635px;top:70px;" width="4" height="4" viewBox="0 0 4 4"><circle cx="2" cy="2" r="1.6" fill="#aeb0b2"/></svg>
<svg style="left:1635px;top:75px;" width="4" height="4" viewBox="0 0 4 4"><circle cx="2" cy="2" r="1.6" fill="#aeb0b2"/></svg>
<div style="left:365px;top:85px;width:73px;height:528px;background:#313335;"></div>
<div style="left:438px;top:85px;width:1212px;height:528px;background:#2b2b2b;"></div>
<div style="left:438px;top:437px;width:1212px;height:22px;background:#323232;"></div>
<div style="left:1403px;top:85px;width:1px;height:528px;background:#3f3f3f;"></div>
<div style="left:437px;top:85px;width:1px;height:528px;background:#4f5254;"></div>
<span style="left:370px;top:90.78px;font-family:'Liberation Mono', monospace;font-size:13.333px;color:#606366;letter-spacing:-1.5px;">18</span>
<span style="left:370px;top:112.78px;font-family:'Liberation Mono', monospace;font-size:13.333px;color:#606366;letter-spacing:-1.5px;">19</span>
<span style="left:370px;top:134.78px;font-family:'Liberation Mono', monospace;font-size:13.333px;color:#606366;letter-spacing:-1.5px;">20</span>
<span style="left:370px;top:156.78px;font-family:'Liberation Mono', monospace;font-size:13.333px;color:#606366;letter-spacing:-1.5px;">21</span>
<span style="left:370px;top:178.78px;font-family:'Liberation Mono', monospace;font-size:13.333px;color:#606366;letter-spacing:-1.5px;">22</span>
<span style="left:370px;top:200.78px;font-family:'Liberation Mono', monospace;font-size:13.333px;color:#606366;letter-spacing:-1.5px;">23</span>
<span style="left:370px;top:222.78px;font-family:'Liberation Mono', monospace;font-size:13.333px;color:#606366;letter-spacing:-1.5px;">24</span>
<span style="left:370px;top:266.78px;font-family:'Liberation Mono', monospace;font-size:13.333px;color:#606366;letter-spacing:-1.5px;">25</span>
<span style="left:370px;top:288.78px;font-family:'Liberation Mono', monospace;font-size:13.333px;color:#606366;letter-spacing:-1.5px;">26</span>
<span style="left:370px;top:310.78px;font-family:'Liberation Mono', monospace;font-size:13.333px;color:#606366;letter-spacing:-1.5px;">27</span>
<span style="left:370px;top:332.78px;font-family:'Liberation Mono', monospace;font-size:13.333px;color:#606366;letter-spacing:-1.5px;">28</span>
<span style="left:370px;top:354.78px;font-family:'Liberation Mono', monospace;font-size:13.333px;color:#606366;letter-spacing:-1.5px;">29</span>
<span style="left:370px;top:398.78px;font-family:'Liberation Mono', monospace;font-size:13.333px;color:#606366;letter-spacing:-1.5px;">30</span>
<span style="left:370px;top:420.78px;font-family:'Liberation Mono', monospace;font-size:13.333px;color:#606366;letter-spacing:-1.5px;">31</span>
<span style="left:370px;top:442.78px;font-family:'Liberation Mono', monospace;font-size:13.333px;color:#a4a3a3;letter-spacing:-1.5px;">32</span>
<span style="left:370px;top:464.78px;font-family:'Liberation Mono', monospace;font-size:13.333px;color:#606366;letter-spacing:-1.5px;">33</span>
<span style="left:370px;top:486.78px;font-family:'Liberation Mono', monospace;font-size:13.333px;color:#606366;letter-spacing:-1.5px;">34</span>
<span style="left:370px;top:508.78px;font-family:'Liberation Mono', monospace;font-size:13.333px;color:#606366;letter-spacing:-1.5px;">35</span>
<span style="left:370px;top:530.78px;font-family:'Liberation Mono', monospace;font-size:13.333px;color:#606366;letter-spacing:-1.5px;">36</span>
<span style="left:370px;top:552.78px;font-family:'Liberation Mono', monospace;font-size:13.333px;color:#606366;letter-spacing:-1.5px;">37</span>
<span style="left:443px;top:90.27px;font-family:'Liberation Mono', monospace;font-size:14.0px;letter-spacing:-0.4013px;"><span style="position:static;color:#629755;font-style:italic"> <span style="position:static;display:inline-block;transform:translate(-0.5px,4px) scale(1.5);">*</span> </span><span style="position:static;color:#629755;font-style:italic;font-weight:bold;text-decoration:underline;">@author</span><span style="position:static;color:#629755;font-style:italic"> Chill</span></span>
<span style="left:443px;top:112.27px;font-family:'Liberation Mono', monospace;font-size:14.0px;letter-spacing:-0.4013px;"><span style="position:static;color:#629755;font-style:italic"> <span style="position:static;display:inline-block;transform:translate(-0.5px,4px) scale(1.5);">*</span>/</span></span>
<span style="left:443px;top:134.27px;font-family:'Liberation Mono', monospace;font-size:14.0px;letter-spacing:-0.4013px;"><span style="position:static;color:#bbb529;">@Service</span></span>
<span style="left:443px;top:156.27px;font-family:'Liberation Mono', monospace;font-size:14.0px;letter-spacing:-0.4013px;"><span style="position:static;color:#cc7832;">public class </span><span style="position:static;color:#a9b7c6;">DynamicServiceImpl </span><span style="position:static;color:#cc7832;">extends </span><span style="position:static;color:#a9b7c6;">BaseServiceImpl&lt;NoticeMapper</span><span style="position:static;color:#cc7832;">, </span><span style="position:static;color:#a9b7c6;">Notice&gt; </span><span style="position:static;color:#cc7832;">implements </span><span style="position:static;color:#a9b7c6;">IDynamicService {</span></span>
<span style="left:443px;top:178.27px;font-family:'Liberation Mono', monospace;font-size:14.0px;letter-spacing:-0.4013px;"><span style="position:static;color:#a9b7c6;">    </span><span style="position:static;color:#bbb529;text-decoration:underline wavy #8a8a5a;">@Autowired</span></span>
<span style="left:443px;top:200.27px;font-family:'Liberation Mono', monospace;font-size:14.0px;letter-spacing:-0.4013px;"><span style="position:static;color:#cc7832;">    private </span><span style="position:static;color:#a9b7c6;">JdbcTemplate </span><span style="position:static;color:#9876aa;">jdbcTemplate</span><span style="position:static;color:#cc7832;">;</span></span>
<span style="left:475px;top:244.42px;font-family:'Liberation Sans', sans-serif;font-size:12.5px;color:#8c8c8c;">1 usage</span>
<span style="left:443px;top:266.27px;font-family:'Liberation Mono', monospace;font-size:14.0px;letter-spacing:-0.4013px;"><span style="position:static;color:#a9b7c6;">    </span><span style="position:static;color:#bbb529;">@Override</span></span>
<span style="left:443px;top:288.27px;font-family:'Liberation Mono', monospace;font-size:14.0px;letter-spacing:-0.4013px;"><span style="position:static;color:#cc7832;">    public </span><span style="position:static;color:#a9b7c6;">List&lt;Notice&gt; </span><span style="position:static;color:#ffc66d;">masterList</span><span style="position:static;color:#a9b7c6;">() {</span></span>
<span style="left:443px;top:310.27px;font-family:'Liberation Mono', monospace;font-size:14.0px;letter-spacing:-0.4013px;"><span style="position:static;color:#cc7832;">        return this</span><span style="position:static;color:#a9b7c6;">.list()</span><span style="position:static;color:#cc7832;">;</span></span>
<span style="left:443px;top:332.27px;font-family:'Liberation Mono', monospace;font-size:14.0px;letter-spacing:-0.4013px;"><span style="position:static;color:#a9b7c6;">    }</span></span>
<span style="left:475px;top:376.42px;font-family:'Liberation Sans', sans-serif;font-size:12.5px;color:#8c8c8c;">1 usage</span>
<span style="left:443px;top:398.27px;font-family:'Liberation Mono', monospace;font-size:14.0px;letter-spacing:-0.4013px;"><span style="position:static;color:#a9b7c6;">    </span><span style="position:static;color:#bbb529;">@Override</span></span>
<span style="left:443px;top:420.27px;font-family:'Liberation Mono', monospace;font-size:14.0px;letter-spacing:-0.4013px;"><span style="position:static;color:#a9b7c6;">    </span><span style="position:static;color:#bbb529;">@DS</span><span style="position:static;color:#a9b7c6;">(</span><span style="position:static;color:#6a8759;">&quot;slave&quot;</span><span style="position:static;color:#a9b7c6;">)</span></span>
<div style="left:563px;top:437px;width:8px;height:22px;background:#3b514d;"></div>
<div style="left:723px;top:437px;width:8px;height:22px;background:#3b514d;"></div>
<div style="left:739px;top:437px;width:72px;height:22px;background:#344134;"></div>
<span style="left:443px;top:442.27px;font-family:'Liberation Mono', monospace;font-size:14.0px;letter-spacing:-0.4013px;"><span style="position:static;color:#cc7832;">    public </span><span style="position:static;color:#a9b7c6;">List</span><span style="position:static;color:#ffef28;">&lt;</span><span style="position:static;color:#a9b7c6;">Map&lt;String</span><span style="position:static;color:#cc7832;">, </span><span style="position:static;color:#a9b7c6;">Object&gt;</span><span style="position:static;color:#ffef28;">&gt;</span><span style="position:static;color:#a9b7c6;"> </span><span style="position:static;color:#ffc66d;">slaveList</span><span style="position:static;color:#a9b7c6;">() {</span></span>
<div style="left:738px;top:440px;width:2px;height:17px;background:#bbbbbb;"></div>
<div style="left:813px;top:459px;width:208px;height:22px;background:#4a4835;"></div>
<div style="left:774px;top:461px;width:29px;height:18px;background:#3b3b3b;border-radius:4px;"></div>
<span style="left:778px;top:463.84px;font-family:'Liberation Sans', sans-serif;font-size:12px;color:#8c8c8c;">sql:</span>
<span style="left:443px;top:464.27px;font-family:'Liberation Mono', monospace;font-size:14.0px;letter-spacing:-0.4013px;"><span style="position:static;color:#cc7832;">        return </span><span style="position:static;color:#9876aa;">jdbcTemplate</span><span style="position:static;color:#a9b7c6;">.queryForList(</span></span>
<span style="left:805px;top:464.27px;font-family:'Liberation Mono', monospace;font-size:14.0px;letter-spacing:-0.4013px;"><span style="position:static;color:#6a8759;">&quot;</span><span style="position:static;color:#cc7832;">SELECT</span><span style="position:static;color:#a9b7c6;"> <span style="position:static;display:inline-block;transform:translate(-0.5px,4px) scale(1.5);">*</span> </span><span style="position:static;color:#cc7832;">FROM</span><span style="position:static;color:#a9b7c6;"> process_data</span><span style="position:static;color:#6a8759;">&quot;</span><span style="position:static;color:#a9b7c6;">)</span><span style="position:static;color:#cc7832;">;</span></span>
<span style="left:443px;top:508.27px;font-family:'Liberation Mono', monospace;font-size:14.0px;letter-spacing:-0.4013px;"><span style="position:static;color:#a9b7c6;">    }</span></span>
<span style="left:443px;top:530.27px;font-family:'Liberation Mono', monospace;font-size:14.0px;letter-spacing:-0.4013px;"><span style="position:static;color:#a9b7c6;">}</span></span>
<div style="left:474px;top:305px;width:1px;height:22px;background:#3b3b3b;"></div>
<div style="left:474px;top:459px;width:1px;height:44px;background:#3b3b3b;"></div>
<svg style="left:432px;top:111px;" width="11" height="13" viewBox="0 0 11 13"><path d="M1.5 11.5h8v-7l-4-3.5l-4 3.5z" fill="#313335" stroke="#6e7173"/><path d="M3.5 7.5h4" stroke="#8a8c8e"/></svg>
<svg style="left:432px;top:290px;" width="11" height="13" viewBox="0 0 11 13"><path d="M1.5 0.5h8v7l-4 3.5l-4-3.5z" fill="#313335" stroke="#6e7173"/><path d="M3.5 4.5h4" stroke="#8a8c8e"/></svg>
<svg style="left:432px;top:331px;" width="11" height="13" viewBox="0 0 11 13"><path d="M1.5 11.5h8v-7l-4-3.5l-4 3.5z" fill="#313335" stroke="#6e7173"/><path d="M3.5 7.5h4" stroke="#8a8c8e"/></svg>
<svg style="left:432px;top:400px;" width="11" height="13" viewBox="0 0 11 13"><path d="M1.5 0.5h8v7l-4 3.5l-4-3.5z" fill="#313335" stroke="#6e7173"/><path d="M3.5 4.5h4" stroke="#8a8c8e"/></svg>
<svg style="left:432px;top:419px;" width="11" height="13" viewBox="0 0 11 13"><path d="M1.5 11.5h8v-7l-4-3.5l-4 3.5z" fill="#313335" stroke="#6e7173"/><path d="M3.5 7.5h4" stroke="#8a8c8e"/></svg>
<svg style="left:432px;top:444px;" width="11" height="13" viewBox="0 0 11 13"><path d="M1.5 0.5h8v7l-4 3.5l-4-3.5z" fill="#313335" stroke="#6e7173"/><path d="M3.5 4.5h4" stroke="#8a8c8e"/></svg>
<svg style="left:432px;top:507px;" width="11" height="13" viewBox="0 0 11 13"><path d="M1.5 11.5h8v-7l-4-3.5l-4 3.5z" fill="#313335" stroke="#6e7173"/><path d="M3.5 7.5h4" stroke="#8a8c8e"/></svg>
<svg style="left:391px;top:133px;" width="16" height="16" viewBox="0 0 16 16"><ellipse cx="7" cy="6.6" rx="7" ry="6.6" fill="#52923d"/><path d="M1.6 1.6L9 9" stroke="#313335" stroke-width="1.2"/><path d="M8.5 2.2l2 2l3.5-4" stroke="#d7dadd" stroke-width="1.4" fill="none"/></svg>
<svg style="left:391px;top:155px;" width="16" height="16" viewBox="0 0 16 16"><ellipse cx="7" cy="6.6" rx="7" ry="6.6" fill="#52923d"/><path d="M1.6 1.6L9 9" stroke="#313335" stroke-width="1.2"/><path d="M9.5 11.5h5l-2.5 3z" fill="#d7dadd" stroke="#313335" stroke-width="0.6"/></svg>
<svg style="left:391px;top:199px;" width="16" height="16" viewBox="0 0 16 16"><ellipse cx="7" cy="6.6" rx="7" ry="6.6" fill="#52923d"/><path d="M1.6 1.6L9 9" stroke="#313335" stroke-width="1.2"/><path d="M6 8.3h4.3V6.3L14.3 10.3L10.3 14.3V12.3H6Z" fill="#a9b5bf" stroke="#313335" stroke-width="1"/></svg>
<svg style="left:389px;top:286px;" width="16" height="16" viewBox="0 0 16 16"><circle cx="6.5" cy="8" r="4.8" fill="#589a3f"/><path d="M6.3 6v4" stroke="#2b2b2b" stroke-width="1.3"/><path d="M13 15V4" stroke="#c75450" stroke-width="1.7"/><path d="M10.2 4.8L13 0.8L15.8 4.8Z" fill="#c75450"/></svg>
<svg style="left:389px;top:440px;" width="16" height="16" viewBox="0 0 16 16"><circle cx="6.5" cy="8" r="4.8" fill="#589a3f"/><path d="M6.3 6v4" stroke="#2b2b2b" stroke-width="1.3"/><path d="M13 15V4" stroke="#c75450" stroke-width="1.7"/><path d="M10.2 4.8L13 0.8L15.8 4.8Z" fill="#c75450"/></svg>
<svg style="left:1549px;top:91px;" width="14" height="13" viewBox="0 0 14 13"><path d="M7 1L13 12H1z" fill="#d6a20f"/><path d="M7 4.5v3.5M7 9.3v1.5" stroke="#2b2b2b" stroke-width="1.8"/></svg>
<span style="left:1565px;top:92.00px;font-family:'Liberation Sans', sans-serif;font-size:13px;color:#bbbbbb;">2</span>
<svg style="left:1579px;top:91px;" width="14" height="13" viewBox="0 0 14 13"><path d="M7 1L13 12H1z" fill="#8b8266"/><path d="M7 4.5v3.5M7 9.3v1.5" stroke="#2b2b2b" stroke-width="1.8"/></svg>
<span style="left:1595px;top:92.00px;font-family:'Liberation Sans', sans-serif;font-size:13px;color:#bbbbbb;">1</span>
<svg style="left:1612px;top:94px;" width="10" height="7" viewBox="0 0 10 7"><path d="M1 6L5 2L9 6" stroke="#aeb0b2" stroke-width="1.3" fill="none"/></svg>
<svg style="left:1633px;top:95px;" width="10" height="7" viewBox="0 0 10 7"><path d="M1 1L5 5L9 1" stroke="#aeb0b2" stroke-width="1.3" fill="none"/></svg>
<div style="left:1640px;top:216px;width:9px;height:352px;background:#4a4c4e;"></div>
<div style="left:1636px;top:273px;width:14px;height:2px;background:#a39f6f;"></div>
<div style="left:1636px;top:450px;width:14px;height:2px;background:#3c9a3c;"></div>
<div style="left:1636px;top:465px;width:14px;height:2px;background:#e0b400;"></div>
<svg style="left:0px;top:0px;pointer-events:none;" width="1920" height="1040" viewBox="0 0 1920 1040"><rect x="420.5" y="391.5" width="720.3" height="132.3" fill="none" stroke="#f04427" stroke-width="2.5"/></svg>
<div style="left:1651px;top:84px;width:246px;height:1px;background:#323232;"></div>
<span style="left:1657px;top:65.00px;font-family:'Liberation Sans', sans-serif;font-size:13px;color:#bbbbbb;">Maven</span>
<svg style="left:1851px;top:64px;" width="14" height="14" viewBox="0 0 14 14"><path fill-rule="evenodd" d="M4.89 2.27L5.43 0.18L8.57 0.18L9.11 2.27L10.04 2.81L12.12 2.23L13.69 4.95L12.15 6.46L12.15 7.54L13.69 9.05L12.12 11.77L10.04 11.19L9.11 11.73L8.57 13.82L5.43 13.82L4.89 11.73L3.96 11.19L1.88 11.77L0.31 9.05L1.85 7.54L1.85 6.46L0.31 4.95L1.88 2.23L3.96 2.81Z M9.38 7.00A2.38 2.38 0 1 0 4.62 7.00A2.38 2.38 0 1 0 9.38 7.00Z" fill="#aeb0b2"/></svg>
<div style="left:1878px;top:70px;width:12px;height:2px;background:#aeb0b2;"></div>
<div style="left:1651px;top:113px;width:246px;height:1px;background:#323232;"></div>
<svg style="left:1659px;top:92px;" width="14" height="14" viewBox="0 0 14 14"><path d="M12 6A5.3 5.3 0 0 0 2.5 4M2 8a5.3 5.3 0 0 0 9.5 2" stroke="#aeb0b2" stroke-width="1.6" fill="none"/><path d="M0.5 1.5v4h4M13.5 12.5v-4h-4" stroke="#aeb0b2" stroke-width="1.5" fill="none"/></svg>
<svg style="left:1685px;top:92px;" width="17" height="17" viewBox="0 0 17 17"><path d="M0 1h5l1.5 2H12v9H0z" fill="#aeb0b2"/><circle cx="12" cy="12" r="4.5" fill="#3c3f41"/><path d="M15 11a3 3 0 0 0-5.5-1M9 13a3 3 0 0 0 5.5 1" stroke="#aeb0b2" stroke-width="1.2" fill="none"/></svg>
<svg style="left:1712px;top:92px;" width="17" height="17" viewBox="0 0 17 17"><path d="M5.5 1v6" stroke="#aeb0b2" stroke-width="1.8"/><path d="M2 6H9L5.5 9.5Z" fill="#aeb0b2"/><path d="M0 12h11.5" stroke="#aeb0b2" stroke-width="2"/><path d="M9 13.5h6l-3 2.8z" fill="#aeb0b2"/></svg>
<div style="left:1735px;top:89px;width:1px;height:20px;background:#515658;"></div>
<svg style="left:1745px;top:93px;" width="12" height="12" viewBox="0 0 12 12"><path d="M6 0v12M0 6h12" stroke="#aeb0b2" stroke-width="1.8"/></svg>
<div style="left:1767px;top:89px;width:1px;height:20px;background:#515658;"></div>
<svg style="left:1779px;top:92px;" width="11" height="14" viewBox="0 0 11 14"><path d="M0 0L11 7L0 14z" fill="#499c54"/></svg>
<svg style="left:1803px;top:93px;" width="15" height="13" viewBox="0 0 15 13"><rect x="0.7" y="0.7" width="13.6" height="11.6" fill="none" stroke="#aeb0b2" stroke-width="1.4"/><path d="M0.7 2.5h13.6" stroke="#aeb0b2" stroke-width="2.2"/><path d="M3 4.5l4 3l-4 3z" fill="#499c54"/></svg>
<svg style="left:1829px;top:91px;" width="15" height="16" viewBox="0 0 15 16"><path d="M0 8h14.5" stroke="#aeb0b2" stroke-width="3.5"/><path d="M3.5 15L7.5 1.5M7.5 15L11.5 1.5" stroke="#3c3f41" stroke-width="3"/><path d="M3.5 15L7.5 1.5M7.5 15L11.5 1.5" stroke="#aeb0b2" stroke-width="1.4"/></svg>
<svg style="left:1855px;top:92px;" width="14" height="14" viewBox="0 0 14 14"><circle cx="7" cy="7" r="5.8" fill="none" stroke="#aeb0b2" stroke-width="1.8"/><path d="M3 11L11 3" stroke="#aeb0b2" stroke-width="1.8"/></svg>
<svg style="left:1883px;top:95px;" width="9" height="7" viewBox="0 0 9 7"><path d="M0.5 0.5L3.5 3.5L0.5 6.5M5 0.5L8 3.5L5 6.5" stroke="#8c8e90" stroke-width="1" fill="none"/></svg>
<div style="left:1651px;top:114px;width:246px;height:499px;overflow:hidden;">
<svg style="left:44px;top:5px;" width="7" height="10" viewBox="0 0 7 10"><path d="M1.5 1L5.5 5L1.5 9" stroke="#9a9da0" stroke-width="1.3" fill="none"/></svg><svg style="left:61px;top:4px;" width="17" height="17" viewBox="0 0 17 17"><path d="M0 0h6l1.5 2H14v9H0z" fill="#8d9296"/><circle cx="11" cy="10" r="5" fill="#3c3f41"/><path fill-rule="evenodd" d="M3.15 1.46L3.49 0.12L5.51 0.12L5.85 1.46L6.46 1.81L7.79 1.43L8.80 3.18L7.81 4.15L7.81 4.85L8.80 5.82L7.79 7.57L6.46 7.19L5.85 7.54L5.51 8.88L3.49 8.88L3.15 7.54L2.54 7.19L1.21 7.57L0.20 5.82L1.19 4.85L1.19 4.15L0.20 3.18L1.21 1.43L2.54 1.81Z M6.3 4.5A1.8 1.8 0 1 0 2.7 4.5A1.8 1.8 0 1 0 6.3 4.5Z" fill="#40b6e0" transform="translate(6.5,5.5)"/></svg><span style="left:79px;top:4.00px;font-family:'Liberation Sans', sans-serif;font-size:13px;color:#bbbbbb;">Plugins</span><svg style="left:44px;top:25px;" width="7" height="10" viewBox="0 0 7 10"><path d="M1.5 1L5.5 5L1.5 9" stroke="#9a9da0" stroke-width="1.3" fill="none"/></svg><svg style="left:61px;top:24px;" width="17" height="17" viewBox="0 0 17 17"><path d="M0 0h6l1.5 2H14v10H0z" fill="#8d9296"/><rect x="6" y="3" width="10" height="10" fill="#3c3f41"/><rect x="7" y="6" width="2.4" height="6" fill="#62b543"/><rect x="10" y="4" width="2.4" height="8" fill="#c5cacd"/><rect x="13" y="6" width="2.4" height="6" fill="#40b6e0"/></svg><span style="left:79px;top:24.00px;font-family:'Liberation Sans', sans-serif;font-size:13px;color:#bbbbbb;">Dependencies</span><svg style="left:44px;top:45px;" width="7" height="10" viewBox="0 0 7 10"><path d="M1.5 1L5.5 5L1.5 9" stroke="#9a9da0" stroke-width="1.3" fill="none"/></svg><svg style="left:63px;top:43px;" width="15" height="16" viewBox="0 0 15 16"><path d="M0 4L4 0V4z" fill="#8e969b"/><path d="M5 0H10V8H3.5V14H0V5H5z" fill="#8e969b"/><text x="3" y="15" font-family="Liberation Sans" font-weight="bold" font-style="italic" font-size="11.5" fill="#40b6e0">m</text></svg><span style="left:79px;top:44.00px;font-family:'Liberation Sans', sans-serif;font-size:13px;color:#bbbbbb;">blade-crm</span><svg style="left:44px;top:65px;" width="7" height="10" viewBox="0 0 7 10"><path d="M1.5 1L5.5 5L1.5 9" stroke="#9a9da0" stroke-width="1.3" fill="none"/></svg><svg style="left:63px;top:63px;" width="15" height="16" viewBox="0 0 15 16"><path d="M0 4L4 0V4z" fill="#8e969b"/><path d="M5 0H10V8H3.5V14H0V5H5z" fill="#8e969b"/><text x="3" y="15" font-family="Liberation Sans" font-weight="bold" font-style="italic" font-size="11.5" fill="#40b6e0">m</text></svg><span style="left:79px;top:64.00px;font-family:'Liberation Sans', sans-serif;font-size:13px;color:#bbbbbb;">blade-demo</span><svg style="left:44px;top:85px;" width="7" height="10" viewBox="0 0 7 10"><path d="M1.5 1L5.5 5L1.5 9" stroke="#9a9da0" stroke-width="1.3" fill="none"/></svg><svg style="left:63px;top:83px;" width="15" height="16" viewBox="0 0 15 16"><path d="M0 4L4 0V4z" fill="#8e969b"/><path d="M5 0H10V8H3.5V14H0V5H5z" fill="#8e969b"/><text x="3" y="15" font-family="Liberation Sans" font-weight="bold" font-style="italic" font-size="11.5" fill="#40b6e0">m</text></svg><span style="left:79px;top:84.00px;font-family:'Liberation Sans', sans-serif;font-size:13px;color:#bbbbbb;">blade-erp</span><svg style="left:44px;top:105px;" width="7" height="10" viewBox="0 0 7 10"><path d="M1.5 1L5.5 5L1.5 9" stroke="#9a9da0" stroke-width="1.3" fill="none"/></svg><svg style="left:63px;top:103px;" width="15" height="16" viewBox="0 0 15 16"><path d="M0 4L4 0V4z" fill="#8e969b"/><path d="M5 0H10V8H3.5V14H0V5H5z" fill="#8e969b"/><text x="3" y="15" font-family="Liberation Sans" font-weight="bold" font-style="italic" font-size="11.5" fill="#40b6e0">m</text></svg><span style="left:79px;top:104.00px;font-family:'Liberation Sans', sans-serif;font-size:13px;color:#bbbbbb;">blade-InkScreen</span><svg style="left:44px;top:125px;" width="7" height="10" viewBox="0 0 7 10"><path d="M1.5 1L5.5 5L1.5 9" stroke="#9a9da0" stroke-width="1.3" fill="none"/></svg><svg style="left:63px;top:123px;" width="15" height="16" viewBox="0 0 15 16"><path d="M0 4L4 0V4z" fill="#8e969b"/><path d="M5 0H10V8H3.5V14H0V5H5z" fill="#8e969b"/><text x="3" y="15" font-family="Liberation Sans" font-weight="bold" font-style="italic" font-size="11.5" fill="#40b6e0">m</text></svg><span style="left:79px;top:124.00px;font-family:'Liberation Sans', sans-serif;font-size:13px;color:#bbbbbb;">blade-mix</span><svg style="left:44px;top:145px;" width="7" height="10" viewBox="0 0 7 10"><path d="M1.5 1L5.5 5L1.5 9" stroke="#9a9da0" stroke-width="1.3" fill="none"/></svg><svg style="left:63px;top:143px;" width="15" height="16" viewBox="0 0 15 16"><path d="M0 4L4 0V4z" fill="#8e969b"/><path d="M5 0H10V8H3.5V14H0V5H5z" fill="#8e969b"/><text x="3" y="15" font-family="Liberation Sans" font-weight="bold" font-style="italic" font-size="11.5" fill="#40b6e0">m</text></svg><span style="left:79px;top:144.00px;font-family:'Liberation Sans', sans-serif;font-size:13px;color:#bbbbbb;">blade-seal</span><svg style="left:44px;top:165px;" width="7" height="10" viewBox="0 0 7 10"><path d="M1.5 1L5.5 5L1.5 9" stroke="#9a9da0" stroke-width="1.3" fill="none"/></svg><svg style="left:63px;top:163px;" width="15" height="16" viewBox="0 0 15 16"><path d="M0 4L4 0V4z" fill="#8e969b"/><path d="M5 0H10V8H3.5V14H0V5H5z" fill="#8e969b"/><text x="3" y="15" font-family="Liberation Sans" font-weight="bold" font-style="italic" font-size="11.5" fill="#40b6e0">m</text></svg><span style="left:79px;top:164.00px;font-family:'Liberation Sans', sans-serif;font-size:13px;color:#bbbbbb;">blade-sx-erpYunInterface</span><svg style="left:44px;top:185px;" width="7" height="10" viewBox="0 0 7 10"><path d="M1.5 1L5.5 5L1.5 9" stroke="#9a9da0" stroke-width="1.3" fill="none"/></svg><svg style="left:63px;top:183px;" width="15" height="16" viewBox="0 0 15 16"><path d="M0 4L4 0V4z" fill="#8e969b"/><path d="M5 0H10V8H3.5V14H0V5H5z" fill="#8e969b"/><text x="3" y="15" font-family="Liberation Sans" font-weight="bold" font-style="italic" font-size="11.5" fill="#40b6e0">m</text></svg><span style="left:79px;top:184.00px;font-family:'Liberation Sans', sans-serif;font-size:13px;color:#bbbbbb;">blade-sx-hcyy</span><svg style="left:44px;top:205px;" width="7" height="10" viewBox="0 0 7 10"><path d="M1.5 1L5.5 5L1.5 9" stroke="#9a9da0" stroke-width="1.3" fill="none"/></svg><svg style="left:63px;top:203px;" width="15" height="16" viewBox="0 0 15 16"><path d="M0 4L4 0V4z" fill="#8e969b"/><path d="M5 0H10V8H3.5V14H0V5H5z" fill="#8e969b"/><text x="3" y="15" font-family="Liberation Sans" font-weight="bold" font-style="italic" font-size="11.5" fill="#40b6e0">m</text></svg><span style="left:79px;top:204.00px;font-family:'Liberation Sans', sans-serif;font-size:13px;color:#bbbbbb;">blade-sx-rcpd</span><svg style="left:44px;top:225px;" width="7" height="10" viewBox="0 0 7 10"><path d="M1.5 1L5.5 5L1.5 9" stroke="#9a9da0" stroke-width="1.3" fill="none"/></svg><svg style="left:63px;top:223px;" width="15" height="16" viewBox="0 0 15 16"><path d="M0 4L4 0V4z" fill="#8e969b"/><path d="M5 0H10V8H3.5V14H0V5H5z" fill="#8e969b"/><text x="3" y="15" font-family="Liberation Sans" font-weight="bold" font-style="italic" font-size="11.5" fill="#40b6e0">m</text></svg><span style="left:79px;top:224.00px;font-family:'Liberation Sans', sans-serif;font-size:13px;color:#bbbbbb;">blade-sx-shrsync</span><svg style="left:42px;top:247px;" width="10" height="6" viewBox="0 0 10 6"><path d="M1 0.5L5 4.5L9 0.5" stroke="#9a9da0" stroke-width="1.3" fill="none"/></svg><svg style="left:63px;top:243px;" width="15" height="16" viewBox="0 0 15 16"><path d="M0 4L4 0V4z" fill="#8e969b"/><path d="M5 0H10V8H3.5V14H0V5H5z" fill="#8e969b"/><text x="3" y="15" font-family="Liberation Sans" font-weight="bold" font-style="italic" font-size="11.5" fill="#40b6e0">m</text></svg><span style="left:79px;top:244.00px;font-family:'Liberation Sans', sans-serif;font-size:13px;color:#bbbbbb;">blade-sx-udi</span><svg style="left:60px;top:267px;" width="10" height="6" viewBox="0 0 10 6"><path d="M1 0.5L5 4.5L9 0.5" stroke="#9a9da0" stroke-width="1.3" fill="none"/></svg><svg style="left:80px;top:264px;" width="17" height="17" viewBox="0 0 17 17"><path d="M0 0h6l1.5 2H14v9H0z" fill="#8d9296"/><circle cx="11" cy="10" r="5" fill="#3c3f41"/><path fill-rule="evenodd" d="M3.15 1.46L3.49 0.12L5.51 0.12L5.85 1.46L6.46 1.81L7.79 1.43L8.80 3.18L7.81 4.15L7.81 4.85L8.80 5.82L7.79 7.57L6.46 7.19L5.85 7.54L5.51 8.88L3.49 8.88L3.15 7.54L2.54 7.19L1.21 7.57L0.20 5.82L1.19 4.85L1.19 4.15L0.20 3.18L1.21 1.43L2.54 1.81Z M6.3 4.5A1.8 1.8 0 1 0 2.7 4.5A1.8 1.8 0 1 0 6.3 4.5Z" fill="#40b6e0" transform="translate(6.5,5.5)"/></svg><span style="left:97px;top:264.00px;font-family:'Liberation Sans', sans-serif;font-size:13px;color:#bbbbbb;">Lifecycle</span><svg style="left:98px;top:284px;" width="13" height="13" viewBox="0 0 13 13"><path fill-rule="evenodd" d="M4.51 2.02L5.04 0.17L7.96 0.17L8.49 2.02L9.38 2.54L11.25 2.07L12.72 4.60L11.37 5.99L11.37 7.01L12.72 8.40L11.25 10.93L9.38 10.46L8.49 10.98L7.96 12.83L5.04 12.83L4.51 10.98L3.62 10.46L1.75 10.93L0.28 8.40L1.63 7.01L1.63 5.99L0.28 4.60L1.75 2.07L3.62 2.54Z M8.9 6.5A2.4 2.4 0 1 0 4.1 6.5A2.4 2.4 0 1 0 8.9 6.5Z" fill="#8e979d"/></svg><span style="left:115px;top:284.00px;font-family:'Liberation Sans', sans-serif;font-size:13px;color:#bbbbbb;">clean</span><svg style="left:98px;top:304px;" width="13" height="13" viewBox="0 0 13 13"><path fill-rule="evenodd" d="M4.51 2.02L5.04 0.17L7.96 0.17L8.49 2.02L9.38 2.54L11.25 2.07L12.72 4.60L11.37 5.99L11.37 7.01L12.72 8.40L11.25 10.93L9.38 10.46L8.49 10.98L7.96 12.83L5.04 12.83L4.51 10.98L3.62 10.46L1.75 10.93L0.28 8.40L1.63 7.01L1.63 5.99L0.28 4.60L1.75 2.07L3.62 2.54Z M8.9 6.5A2.4 2.4 0 1 0 4.1 6.5A2.4 2.4 0 1 0 8.9 6.5Z" fill="#8e979d"/></svg><span style="left:115px;top:304.00px;font-family:'Liberation Sans', sans-serif;font-size:13px;color:#bbbbbb;">validate</span><svg style="left:98px;top:324px;" width="13" height="13" viewBox="0 0 13 13"><path fill-rule="evenodd" d="M4.51 2.02L5.04 0.17L7.96 0.17L8.49 2.02L9.38 2.54L11.25 2.07L12.72 4.60L11.37 5.99L11.37 7.01L12.72 8.40L11.25 10.93L9.38 10.46L8.49 10.98L7.96 12.83L5.04 12.83L4.51 10.98L3.62 10.46L1.75 10.93L0.28 8.40L1.63 7.01L1.63 5.99L0.28 4.60L1.75 2.07L3.62 2.54Z M8.9 6.5A2.4 2.4 0 1 0 4.1 6.5A2.4 2.4 0 1 0 8.9 6.5Z" fill="#8e979d"/></svg><span style="left:115px;top:324.00px;font-family:'Liberation Sans', sans-serif;font-size:13px;color:#bbbbbb;">compile</span><svg style="left:98px;top:344px;" width="13" height="13" viewBox="0 0 13 13"><path fill-rule="evenodd" d="M4.51 2.02L5.04 0.17L7.96 0.17L8.49 2.02L9.38 2.54L11.25 2.07L12.72 4.60L11.37 5.99L11.37 7.01L12.72 8.40L11.25 10.93L9.38 10.46L8.49 10.98L7.96 12.83L5.04 12.83L4.51 10.98L3.62 10.46L1.75 10.93L0.28 8.40L1.63 7.01L1.63 5.99L0.28 4.60L1.75 2.07L3.62 2.54Z M8.9 6.5A2.4 2.4 0 1 0 4.1 6.5A2.4 2.4 0 1 0 8.9 6.5Z" fill="#8e979d"/></svg><span style="left:115px;top:344.00px;font-family:'Liberation Sans', sans-serif;font-size:13px;color:#bbbbbb;">test</span><svg style="left:98px;top:364px;" width="13" height="13" viewBox="0 0 13 13"><path fill-rule="evenodd" d="M4.51 2.02L5.04 0.17L7.96 0.17L8.49 2.02L9.38 2.54L11.25 2.07L12.72 4.60L11.37 5.99L11.37 7.01L12.72 8.40L11.25 10.93L9.38 10.46L8.49 10.98L7.96 12.83L5.04 12.83L4.51 10.98L3.62 10.46L1.75 10.93L0.28 8.40L1.63 7.01L1.63 5.99L0.28 4.60L1.75 2.07L3.62 2.54Z M8.9 6.5A2.4 2.4 0 1 0 4.1 6.5A2.4 2.4 0 1 0 8.9 6.5Z" fill="#8e979d"/></svg><span style="left:115px;top:364.00px;font-family:'Liberation Sans', sans-serif;font-size:13px;color:#bbbbbb;">package</span><svg style="left:98px;top:384px;" width="13" height="13" viewBox="0 0 13 13"><path fill-rule="evenodd" d="M4.51 2.02L5.04 0.17L7.96 0.17L8.49 2.02L9.38 2.54L11.25 2.07L12.72 4.60L11.37 5.99L11.37 7.01L12.72 8.40L11.25 10.93L9.38 10.46L8.49 10.98L7.96 12.83L5.04 12.83L4.51 10.98L3.62 10.46L1.75 10.93L0.28 8.40L1.63 7.01L1.63 5.99L0.28 4.60L1.75 2.07L3.62 2.54Z M8.9 6.5A2.4 2.4 0 1 0 4.1 6.5A2.4 2.4 0 1 0 8.9 6.5Z" fill="#8e979d"/></svg><span style="left:115px;top:384.00px;font-family:'Liberation Sans', sans-serif;font-size:13px;color:#bbbbbb;">verify</span><div style="left:0px;top:400px;width:246px;height:20px;background:#0d293e;"></div><svg style="left:98px;top:404px;" width="13" height="13" viewBox="0 0 13 13"><path fill-rule="evenodd" d="M4.51 2.02L5.04 0.17L7.96 0.17L8.49 2.02L9.38 2.54L11.25 2.07L12.72 4.60L11.37 5.99L11.37 7.01L12.72 8.40L11.25 10.93L9.38 10.46L8.49 10.98L7.96 12.83L5.04 12.83L4.51 10.98L3.62 10.46L1.75 10.93L0.28 8.40L1.63 7.01L1.63 5.99L0.28 4.60L1.75 2.07L3.62 2.54Z M8.9 6.5A2.4 2.4 0 1 0 4.1 6.5A2.4 2.4 0 1 0 8.9 6.5Z" fill="#8e979d"/></svg><span style="left:115px;top:404.00px;font-family:'Liberation Sans', sans-serif;font-size:13px;color:#bbbbbb;">install</span><svg style="left:98px;top:424px;" width="13" height="13" viewBox="0 0 13 13"><path fill-rule="evenodd" d="M4.51 2.02L5.04 0.17L7.96 0.17L8.49 2.02L9.38 2.54L11.25 2.07L12.72 4.60L11.37 5.99L11.37 7.01L12.72 8.40L11.25 10.93L9.38 10.46L8.49 10.98L7.96 12.83L5.04 12.83L4.51 10.98L3.62 10.46L1.75 10.93L0.28 8.40L1.63 7.01L1.63 5.99L0.28 4.60L1.75 2.07L3.62 2.54Z M8.9 6.5A2.4 2.4 0 1 0 4.1 6.5A2.4 2.4 0 1 0 8.9 6.5Z" fill="#8e979d"/></svg><span style="left:115px;top:424.00px;font-family:'Liberation Sans', sans-serif;font-size:13px;color:#bbbbbb;">site</span><svg style="left:98px;top:444px;" width="13" height="13" viewBox="0 0 13 13"><path fill-rule="evenodd" d="M4.51 2.02L5.04 0.17L7.96 0.17L8.49 2.02L9.38 2.54L11.25 2.07L12.72 4.60L11.37 5.99L11.37 7.01L12.72 8.40L11.25 10.93L9.38 10.46L8.49 10.98L7.96 12.83L5.04 12.83L4.51 10.98L3.62 10.46L1.75 10.93L0.28 8.40L1.63 7.01L1.63 5.99L0.28 4.60L1.75 2.07L3.62 2.54Z M8.9 6.5A2.4 2.4 0 1 0 4.1 6.5A2.4 2.4 0 1 0 8.9 6.5Z" fill="#8e979d"/></svg><span style="left:115px;top:444.00px;font-family:'Liberation Sans', sans-serif;font-size:13px;color:#bbbbbb;">deploy</span><svg style="left:62px;top:465px;" width="7" height="10" viewBox="0 0 7 10"><path d="M1.5 1L5.5 5L1.5 9" stroke="#9a9da0" stroke-width="1.3" fill="none"/></svg><svg style="left:80px;top:464px;" width="17" height="17" viewBox="0 0 17 17"><path d="M0 0h6l1.5 2H14v9H0z" fill="#8d9296"/><circle cx="11" cy="10" r="5" fill="#3c3f41"/><path fill-rule="evenodd" d="M3.15 1.46L3.49 0.12L5.51 0.12L5.85 1.46L6.46 1.81L7.79 1.43L8.80 3.18L7.81 4.15L7.81 4.85L8.80 5.82L7.79 7.57L6.46 7.19L5.85 7.54L5.51 8.88L3.49 8.88L3.15 7.54L2.54 7.19L1.21 7.57L0.20 5.82L1.19 4.85L1.19 4.15L0.20 3.18L1.21 1.43L2.54 1.81Z M6.3 4.5A1.8 1.8 0 1 0 2.7 4.5A1.8 1.8 0 1 0 6.3 4.5Z" fill="#40b6e0" transform="translate(6.5,5.5)"/></svg><span style="left:97px;top:464.00px;font-family:'Liberation Sans', sans-serif;font-size:13px;color:#bbbbbb;">Plugins</span><svg style="left:62px;top:485px;" width="7" height="10" viewBox="0 0 7 10"><path d="M1.5 1L5.5 5L1.5 9" stroke="#9a9da0" stroke-width="1.3" fill="none"/></svg><svg style="left:80px;top:484px;" width="17" height="17" viewBox="0 0 17 17"><path d="M0 0h6l1.5 2H14v10H0z" fill="#8d9296"/><rect x="6" y="3" width="10" height="10" fill="#3c3f41"/><rect x="7" y="6" width="2.4" height="6" fill="#62b543"/><rect x="10" y="4" width="2.4" height="8" fill="#c5cacd"/><rect x="13" y="6" width="2.4" height="6" fill="#40b6e0"/></svg><span style="left:97px;top:484.00px;font-family:'Liberation Sans', sans-serif;font-size:13px;color:#bbbbbb;">Dependencies</span><div style="left:236px;top:113px;width:8px;height:252px;background:#4f5254;"></div>
</div>
<div style="left:22px;top:640px;width:1875px;height:1px;background:#323232;"></div>
<span style="left:28px;top:621.00px;font-family:'Liberation Sans', sans-serif;font-size:13px;color:#bbbbbb;">Debug:</span>
<svg style="left:90px;top:620px;" width="16" height="16" viewBox="0 0 16 16"><path d="M0 8C0 4.5 3.5 3.5 7.5 3C10 2.6 11.5 1.8 12.6 0.5C13.6 2.5 13.8 5 13.6 7H6.8L5.8 11.6C2.5 12.2 0 11.5 0 8Z" fill="#5a9a43"/><path d="M3.5 13.5L6 11.8L6.3 13z" fill="#4f8a3b"/><path d="M15 11L12.75 14.9H8.25L6 11L8.25 7.1H12.75Z" fill="#a9b4bd" stroke="#3c3f41" stroke-width="0.8"/><circle cx="10.5" cy="11" r="2.3" fill="none" stroke="#3a3d40" stroke-width="1.1"/><path d="M10.5 8.3V11" stroke="#3a3d40" stroke-width="1.1"/><circle cx="13.5" cy="14" r="2" fill="#21d121"/></svg>
<span style="left:109px;top:621.00px;font-family:'Liberation Sans', sans-serif;font-size:13px;color:#bbbbbb;">DemoApplication</span>
<svg style="left:216px;top:624px;" width="8" height="8" viewBox="0 0 8 8"><path d="M0.5 0.5L7.5 7.5M7.5 0.5L0.5 7.5" stroke="#6e7173" stroke-width="1.1"/></svg>
<div style="left:77px;top:638px;width:157px;height:3px;background:#747a80;border-radius:1.5px"></div>
<svg style="left:1851px;top:620px;" width="14" height="14" viewBox="0 0 14 14"><path fill-rule="evenodd" d="M4.89 2.27L5.43 0.18L8.57 0.18L9.11 2.27L10.04 2.81L12.12 2.23L13.69 4.95L12.15 6.46L12.15 7.54L13.69 9.05L12.12 11.77L10.04 11.19L9.11 11.73L8.57 13.82L5.43 13.82L4.89 11.73L3.96 11.19L1.88 11.77L0.31 9.05L1.85 7.54L1.85 6.46L0.31 4.95L1.88 2.23L3.96 2.81Z M9.38 7.00A2.38 2.38 0 1 0 4.62 7.00A2.38 2.38 0 1 0 9.38 7.00Z" fill="#aeb0b2"/></svg>
<div style="left:1877px;top:626px;width:13px;height:2px;background:#aeb0b2;"></div>
<div style="left:50px;top:641px;width:1px;height:348px;background:#323232;"></div>
<svg style="left:29px;top:647px;" width="16" height="17" viewBox="0 0 16 17"><path d="M7.6 15.2A5.3 5.3 0 0 1 7.6 4.6H10.5" stroke="#4fa45a" stroke-width="2.4" fill="none"/><path d="M9.8 0.8L14.3 4.6L9.8 8.4Z" fill="#4fa45a"/><rect x="8" y="10" width="5" height="5" fill="#c5c7c9"/></svg>
<svg style="left:29px;top:674px;" width="15" height="15" viewBox="0 0 15 15"><path d="M2 13L8 7" stroke="#aeb0b2" stroke-width="2.6"/><path d="M7 8A4 4 0 0 1 12 2.5L10 4.5l1.5 1.5l2-2A4 4 0 0 1 8 9z" fill="#aeb0b2"/></svg>
<div style="left:26px;top:697px;width:20px;height:1px;background:#515658;"></div>
<svg style="left:30px;top:707px;" width="12" height="13" viewBox="0 0 12 13"><rect x="0" y="0" width="2.5" height="13" fill="#5c5e60"/><path d="M4 0L12 6.5L4 13z" fill="#5c5e60"/></svg>
<svg style="left:31px;top:733px;" width="10" height="12" viewBox="0 0 10 12"><rect x="0" y="0" width="3" height="12" fill="#aeb0b2"/><rect x="6" y="0" width="3" height="12" fill="#aeb0b2"/></svg>
<div style="left:31px;top:760px;width:11px;height:11px;background:#c75450;"></div>
<div style="left:26px;top:782px;width:20px;height:1px;background:#515658;"></div>
<svg style="left:28px;top:790px;" width="16" height="14" viewBox="0 0 16 14"><circle cx="10" cy="5" r="4.5" fill="#c75450"/><circle cx="6" cy="9" r="4.5" fill="#c75450" stroke="#3c3f41" stroke-width="1"/></svg>
<svg style="left:29px;top:818px;" width="14" height="14" viewBox="0 0 14 14"><circle cx="7" cy="7" r="4.5" fill="#c75450" opacity="0.85"/><path d="M1 13L13 1" stroke="#3c3f41" stroke-width="2.5"/><path d="M1 13L13 1" stroke="#c75450" stroke-width="1.2"/></svg>
<div style="left:26px;top:841px;width:20px;height:1px;background:#515658;"></div>
<svg style="left:29px;top:851px;" width="15" height="13" viewBox="0 0 15 13"><path d="M0 3h4l1.5-2.5h4L11 3h4v10H0z" fill="#aeb0b2"/><circle cx="7.5" cy="7.5" r="2.6" fill="#3c3f41"/><circle cx="7.5" cy="7.5" r="1.5" fill="#aeb0b2"/></svg>
<div style="left:26px;top:874px;width:20px;height:1px;background:#515658;"></div>
<svg style="left:28px;top:883px;" width="18" height="17" viewBox="0 0 18 17"><g transform="scale(0.95)"><path d="M6 0h2l.4 2.1 1.5.7 1.8-1.2 1.4 1.4-1.2 1.8.7 1.5 2.1.4v2l-2.1.4-.7 1.5 1.2 1.8-1.4 1.4-1.8-1.2-1.5.7L8 14H6l-.4-2.1-1.5-.7-1.8 1.2-1.4-1.4 1.2-1.8-.7-1.5L0 8V6l2.1-.4.7-1.5L1.6 2.3 3 .9l1.8 1.2 1.5-.7z" fill="#aeb0b2"/><circle cx="7" cy="7" r="2.3" fill="#3c3f41"/></g><path d="M12 13h5l-2.5 3z" fill="#aeb0b2"/></svg>
<div style="left:26px;top:907px;width:20px;height:1px;background:#515658;"></div>
<svg style="left:29px;top:916px;" width="15" height="15" viewBox="0 0 15 15"><path d="M8 1l6 6l-2 1l-3 3l-1 2l-6-6l2-1l3-3z" fill="#aeb0b2"/><path d="M5 10L1 14" stroke="#aeb0b2" stroke-width="1.6"/></svg>
<div style="left:51px;top:669px;width:1846px;height:1px;background:#323232;"></div>
<span style="left:64px;top:650.84px;font-family:'Liberation Sans', sans-serif;font-size:12px;color:#bbbbbb;">Debugger</span>
<span style="left:141px;top:650.84px;font-family:'Liberation Sans', sans-serif;font-size:12px;color:#bbbbbb;">Console</span>
<div style="left:128px;top:668px;width:68px;height:2px;background:#747a80;"></div>
<svg style="left:207px;top:647px;" width="16" height="16" viewBox="0 0 16 16"><path d="M9 2.5L3 13M9 2.5L12.5 13M3 13L0.8 9.5" stroke="#c75a28" stroke-width="1.3" fill="none"/><circle cx="9.3" cy="2.5" r="2.4" fill="#c75a28"/><circle cx="3" cy="13" r="2.4" fill="#c75a28"/><circle cx="12.3" cy="13" r="2.4" fill="#c75a28"/></svg>
<span style="left:227px;top:650.42px;font-family:'Liberation Sans', sans-serif;font-size:12.5px;color:#bbbbbb;">Actuator</span>
<svg style="left:287px;top:649px;" width="14" height="13" viewBox="0 0 14 13"><path d="M0.5 2h12.5M0.5 6.5h12.5M0.5 11h12.5" stroke="#6d6f71" stroke-width="2"/></svg>
<div style="left:310px;top:645px;width:1px;height:20px;background:#515658;"></div>
<svg style="left:320px;top:648px;" width="15" height="15" viewBox="0 0 15 15"><path d="M1 6.5L4.5 2.5L9.5 7.5" stroke="#5f6163" stroke-width="1.7" fill="none"/><path d="M7 9.5H13V3.5Z" fill="#5f6163"/><path d="M0.5 13h12.5" stroke="#5f6163" stroke-width="2"/></svg>
<svg style="left:346px;top:648px;" width="14" height="15" viewBox="0 0 14 15"><path d="M6.5 1v5.5" stroke="#5f6163" stroke-width="1.8"/><path d="M2.5 6H10.5L6.5 10Z" fill="#5f6163"/><path d="M0.5 13h12" stroke="#5f6163" stroke-width="2"/></svg>
<svg style="left:372px;top:648px;" width="14" height="15" viewBox="0 0 14 15"><path d="M6.5 10V4.5" stroke="#5f6163" stroke-width="1.8"/><path d="M2.5 5H10.5L6.5 1Z" fill="#5f6163"/><path d="M0.5 13h12" stroke="#5f6163" stroke-width="2"/></svg>
<svg style="left:398px;top:648px;" width="16" height="16" viewBox="0 0 16 16"><path d="M1 1L7 7" stroke="#5f6163" stroke-width="1.8"/><path d="M9 3V9H3Z" fill="#5f6163"/><path d="M11.5 7v8M10 7h3M10 15h3" stroke="#5f6163" stroke-width="1"/></svg>
<div style="left:421px;top:645px;width:1px;height:20px;background:#515658;"></div>
<svg style="left:432px;top:649px;" width="13" height="13" viewBox="0 0 13 13"><rect x="1" y="1" width="11" height="11" fill="none" stroke="#5f6163" stroke-width="2"/><path d="M1 3.5h11" stroke="#5f6163" stroke-width="2.5"/><path d="M1 7.5h11M4.7 4v8M8.3 4v8" stroke="#5f6163" stroke-width="1.1"/></svg>
<svg style="left:457px;top:649px;" width="14" height="13" viewBox="0 0 14 13"><path d="M0.5 1.5h4M0.5 6h5M0.5 10.5h4M9 1.5h4.5M8 6h5.5M9 10.5h4.5" stroke="#5f6163" stroke-width="1.8"/><path d="M5 1.5Q7 1.5 7.5 6Q8 10.5 9.5 10.5M5 10.5Q7 10.5 7.5 6Q8 1.5 9.5 1.5" stroke="#5f6163" stroke-width="1.2" fill="none"/></svg>
<svg style="left:1877px;top:649px;" width="16" height="16" viewBox="0 0 16 16"><rect x="0" y="0" width="6" height="5" fill="#aeb0b2"/><rect x="7" y="0" width="6" height="5" fill="#aeb0b2"/><rect x="0" y="6" width="13" height="5" fill="#aeb0b2"/><path d="M10 12h6l-3 3z" fill="#aeb0b2"/></svg>
<div style="left:79px;top:670px;width:1px;height:319px;background:#323232;"></div>
<svg style="left:60px;top:678px;" width="11" height="14" viewBox="0 0 11 14"><path d="M5.5 14V1.5M1 6l4.5-4.5L10 6" stroke="#aeb0b2" stroke-width="1.7" fill="none"/></svg>
<svg style="left:60px;top:704px;" width="11" height="14" viewBox="0 0 11 14"><path d="M5.5 0v12.5M1 8l4.5 4.5L10 8" stroke="#aeb0b2" stroke-width="1.7" fill="none"/></svg>
<svg style="left:58px;top:730px;" width="15" height="14" viewBox="0 0 15 14"><path d="M0 1.5h14M0 6h10q4 0 4 3q0 3-4 3H6M0 11h3" stroke="#aeb0b2" stroke-width="1.5" fill="none"/><path d="M8 9.5l-3 2.5l3 2.5" stroke="#aeb0b2" stroke-width="1.4" fill="none"/></svg>
<div style="left:54px;top:752px;width:22px;height:22px;background:#4c5052;border-radius:3px"></div>
<svg style="left:58px;top:756px;" width="15" height="14" viewBox="0 0 15 14"><path d="M0 2h5M0 6h5M0 10h5M0 13h15" stroke="#aeb0b2" stroke-width="1.5"/><path d="M10.5 0v8M7.5 5.5l3 3l3-3" stroke="#aeb0b2" stroke-width="1.5" fill="none"/></svg>
<svg style="left:57px;top:782px;" width="16" height="15" viewBox="0 0 16 15"><rect x="3.5" y="0" width="9" height="4" fill="#aeb0b2"/><path d="M0 5h16v6h-3v-3H3v3H0z" fill="#aeb0b2"/><rect x="4" y="9.5" width="8" height="5" fill="#aeb0b2"/></svg>
<svg style="left:59px;top:807px;" width="12" height="14" viewBox="0 0 12 14"><rect x="0" y="2" width="12" height="1.8" fill="#aeb0b2"/><rect x="4" y="0" width="4" height="2" fill="#aeb0b2"/><path d="M1.5 4.5h9l-1 9.5h-7z" fill="#aeb0b2"/></svg>
<div style="left:80px;top:670px;width:1817px;height:319px;background:#2b2b2b;"></div>
<div style="left:80px;top:670px;width:1817px;height:310px;overflow:hidden;">
<span style="left:11px;top:2.27px;font-family:'Liberation Mono', monospace;font-size:14.0px;letter-spacing:-0.4013px;"><span style="position:static;color:#bbbbbb">2026-04-24 14:23:37.539  </span><span style="position:static;color:#ab9b2b">WARN</span><span style="position:static;color:#bbbbbb"> </span><span style="position:static;color:#a675c9">41020</span><span style="position:static;color:#bbbbbb"> --- [  XNIO-1 task-2] </span><span style="position:static;color:#299c9c">c.a.c.s.e.SentinelHealthIndicator</span><span style="position:static;color:#bbbbbb">        : Sentinel dashboard heartbeat message can&#x27;t be sent to the dashboard servers [Endpoint{protocol=HTTP, host=&#x27;127.0.0.1, port=8858}]</span></span><span style="left:11px;top:24.27px;font-family:'Liberation Mono', monospace;font-size:14.0px;letter-spacing:-0.4013px;"><span style="position:static;color:#bbbbbb">2026-04-24 14:23:57.542  </span><span style="position:static;color:#6a9f3f">INFO</span><span style="position:static;color:#bbbbbb"> </span><span style="position:static;color:#a675c9">41020</span><span style="position:static;color:#bbbbbb"> --- [  XNIO-1 task-2] </span><span style="position:static;color:#299c9c">c.a.c.s.e.SentinelHealthIndicator</span><span style="position:static;color:#bbbbbb">        : Find sentinel dashboard server list: [Endpoint{protocol=HTTP, host=&#x27;127.0.0.1, port=8858}]</span></span><span style="left:11px;top:46.27px;font-family:'Liberation Mono', monospace;font-size:14.0px;letter-spacing:-0.4013px;"><span style="position:static;color:#bbbbbb">2026-04-24 14:23:57.555  </span><span style="position:static;color:#ab9b2b">WARN</span><span style="position:static;color:#bbbbbb"> </span><span style="position:static;color:#a675c9">41020</span><span style="position:static;color:#bbbbbb"> --- [  XNIO-1 task-2] </span><span style="position:static;color:#299c9c">c.a.c.s.e.SentinelHealthIndicator</span><span style="position:static;color:#bbbbbb">        : Sentinel dashboard heartbeat message can&#x27;t be sent to the dashboard servers [Endpoint{protocol=HTTP, host=&#x27;127.0.0.1, port=8858}]</span></span><span style="left:11px;top:68.27px;font-family:'Liberation Mono', monospace;font-size:14.0px;letter-spacing:-0.4013px;"><span style="position:static;color:#bbbbbb">2026-04-24 14:24:17.540  </span><span style="position:static;color:#6a9f3f">INFO</span><span style="position:static;color:#bbbbbb"> </span><span style="position:static;color:#a675c9">41020</span><span style="position:static;color:#bbbbbb"> --- [  XNIO-1 task-2] </span><span style="position:static;color:#299c9c">c.a.c.s.e.SentinelHealthIndicator</span><span style="position:static;color:#bbbbbb">        : Find sentinel dashboard server list: [Endpoint{protocol=HTTP, host=&#x27;127.0.0.1, port=8858}]</span></span><span style="left:11px;top:90.27px;font-family:'Liberation Mono', monospace;font-size:14.0px;letter-spacing:-0.4013px;"><span style="position:static;color:#bbbbbb">2026-04-24 14:24:17.551  </span><span style="position:static;color:#ab9b2b">WARN</span><span style="position:static;color:#bbbbbb"> </span><span style="position:static;color:#a675c9">41020</span><span style="position:static;color:#bbbbbb"> --- [  XNIO-1 task-2] </span><span style="position:static;color:#299c9c">c.a.c.s.e.SentinelHealthIndicator</span><span style="position:static;color:#bbbbbb">        : Sentinel dashboard heartbeat message can&#x27;t be sent to the dashboard servers [Endpoint{protocol=HTTP, host=&#x27;127.0.0.1, port=8858}]</span></span><span style="left:11px;top:112.27px;font-family:'Liberation Mono', monospace;font-size:14.0px;letter-spacing:-0.4013px;"><span style="position:static;color:#bbbbbb">2026-04-24 14:24:37.539  </span><span style="position:static;color:#6a9f3f">INFO</span><span style="position:static;color:#bbbbbb"> </span><span style="position:static;color:#a675c9">41020</span><span style="position:static;color:#bbbbbb"> --- [  XNIO-1 task-2] </span><span style="position:static;color:#299c9c">c.a.c.s.e.SentinelHealthIndicator</span><span style="position:static;color:#bbbbbb">        : Find sentinel dashboard server list: [Endpoint{protocol=HTTP, host=&#x27;127.0.0.1, port=8858}]</span></span><span style="left:11px;top:134.27px;font-family:'Liberation Mono', monospace;font-size:14.0px;letter-spacing:-0.4013px;"><span style="position:static;color:#bbbbbb">2026-04-24 14:24:37.539  </span><span style="position:static;color:#ab9b2b">WARN</span><span style="position:static;color:#bbbbbb"> </span><span style="position:static;color:#a675c9">41020</span><span style="position:static;color:#bbbbbb"> --- [  XNIO-1 task-2] </span><span style="position:static;color:#299c9c">c.a.c.s.e.SentinelHealthIndicator</span><span style="position:static;color:#bbbbbb">        : Sentinel dashboard heartbeat message can&#x27;t be sent to the dashboard servers [Endpoint{protocol=HTTP, host=&#x27;127.0.0.1, port=8858}]</span></span><span style="left:11px;top:156.27px;font-family:'Liberation Mono', monospace;font-size:14.0px;letter-spacing:-0.4013px;"><span style="position:static;color:#bbbbbb">2026-04-24 14:24:57.541  </span><span style="position:static;color:#6a9f3f">INFO</span><span style="position:static;color:#bbbbbb"> </span><span style="position:static;color:#a675c9">41020</span><span style="position:static;color:#bbbbbb"> --- [  XNIO-1 task-2] </span><span style="position:static;color:#299c9c">c.a.c.s.e.SentinelHealthIndicator</span><span style="position:static;color:#bbbbbb">        : Find sentinel dashboard server list: [Endpoint{protocol=HTTP, host=&#x27;127.0.0.1, port=8858}]</span></span><span style="left:11px;top:178.27px;font-family:'Liberation Mono', monospace;font-size:14.0px;letter-spacing:-0.4013px;"><span style="position:static;color:#bbbbbb">2026-04-24 14:24:57.542  </span><span style="position:static;color:#ab9b2b">WARN</span><span style="position:static;color:#bbbbbb"> </span><span style="position:static;color:#a675c9">41020</span><span style="position:static;color:#bbbbbb"> --- [  XNIO-1 task-2] </span><span style="position:static;color:#299c9c">c.a.c.s.e.SentinelHealthIndicator</span><span style="position:static;color:#bbbbbb">        : Sentinel dashboard heartbeat message can&#x27;t be sent to the dashboard servers [Endpoint{protocol=HTTP, host=&#x27;127.0.0.1, port=8858}]</span></span><span style="left:11px;top:200.27px;font-family:'Liberation Mono', monospace;font-size:14.0px;letter-spacing:-0.4013px;"><span style="position:static;color:#bbbbbb">2026-04-24 14:25:17.541  </span><span style="position:static;color:#6a9f3f">INFO</span><span style="position:static;color:#bbbbbb"> </span><span style="position:static;color:#a675c9">41020</span><span style="position:static;color:#bbbbbb"> --- [  XNIO-1 task-2] </span><span style="position:static;color:#299c9c">c.a.c.s.e.SentinelHealthIndicator</span><span style="position:static;color:#bbbbbb">        : Find sentinel dashboard server list: [Endpoint{protocol=HTTP, host=&#x27;127.0.0.1, port=8858}]</span></span><span style="left:11px;top:222.27px;font-family:'Liberation Mono', monospace;font-size:14.0px;letter-spacing:-0.4013px;"><span style="position:static;color:#bbbbbb">2026-04-24 14:25:17.542  </span><span style="position:static;color:#ab9b2b">WARN</span><span style="position:static;color:#bbbbbb"> </span><span style="position:static;color:#a675c9">41020</span><span style="position:static;color:#bbbbbb"> --- [  XNIO-1 task-2] </span><span style="position:static;color:#299c9c">c.a.c.s.e.SentinelHealthIndicator</span><span style="position:static;color:#bbbbbb">        : Sentinel dashboard heartbeat message can&#x27;t be sent to the dashboard servers [Endpoint{protocol=HTTP, host=&#x27;127.0.0.1, port=8858}]</span></span><span style="left:11px;top:244.27px;font-family:'Liberation Mono', monospace;font-size:14.0px;letter-spacing:-0.4013px;"><span style="position:static;color:#bbbbbb">2026-04-24 14:25:37.541  </span><span style="position:static;color:#6a9f3f">INFO</span><span style="position:static;color:#bbbbbb"> </span><span style="position:static;color:#a675c9">41020</span><span style="position:static;color:#bbbbbb"> --- [  XNIO-1 task-2] </span><span style="position:static;color:#299c9c">c.a.c.s.e.SentinelHealthIndicator</span><span style="position:static;color:#bbbbbb">        : Find sentinel dashboard server list: [Endpoint{protocol=HTTP, host=&#x27;127.0.0.1, port=8858}]</span></span><span style="left:11px;top:266.27px;font-family:'Liberation Mono', monospace;font-size:14.0px;letter-spacing:-0.4013px;"><span style="position:static;color:#bbbbbb">2026-04-24 14:25:37.541  </span><span style="position:static;color:#ab9b2b">WARN</span><span style="position:static;color:#bbbbbb"> </span><span style="position:static;color:#a675c9">41020</span><span style="position:static;color:#bbbbbb"> --- [  XNIO-1 task-2] </span><span style="position:static;color:#299c9c">c.a.c.s.e.SentinelHealthIndicator</span><span style="position:static;color:#bbbbbb">        : Sentinel dashboard heartbeat message can&#x27;t be sent to the dashboard servers [Endpoint{protocol=HTTP, host=&#x27;127.0.0.1, port=8858}]</span></span>
</div>
<div style="left:92px;top:980px;width:378px;height:8px;background:#4b4d4f;"></div>
<div style="left:1888px;top:961px;width:8px;height:27px;background:#4b4d4f;"></div>
<div style="left:1537px;top:918px;width:4.5px;height:16px;background:#55b870;"></div>
<div style="left:1537px;top:918px;width:17px;height:3.5px;background:#55b870;"></div>
<div style="left:1828px;top:963px;width:4.5px;height:16px;background:#55b870;"></div>
<div style="left:1816px;top:975.5px;width:16.5px;height:3.5px;background:#55b870;"></div>
<svg style="left:1550px;top:935px;" width="130" height="28" viewBox="0 0 130 28"><g fill="#55b870" transform="translate(0,25) skewX(-10) translate(0,-25)"><path fill-rule="evenodd" d="M4 2H23L27 6V11L24.5 13.5L27 16V21L23 25H4Z M11 7.5V11H19V7.5Z M11 16V20H19V16Z"/><path d="M30 0H38V25H30Z"/><path fill-rule="evenodd" d="M42 8H60L63 11V25H42V15H55V12.5H42Z M49 19V21.5H55V19Z"/><path fill-rule="evenodd" d="M83 0H91V25H66V11L69 8H83Z M73 13V20H83V13Z"/><path fill-rule="evenodd" d="M97 8H114L117 11V18H103V20.5H116V25H94V11Z M103 12.5V14.5H110V12.5Z"/></g></svg>
<svg style="left:1672px;top:934px;" width="40" height="32" viewBox="0 0 40 32"><g stroke="#55b870" stroke-width="5" fill="none" stroke-linecap="butt" stroke-linejoin="miter" transform="translate(0,29) skewX(-10) translate(0,-29)"><path d="M2 9H15M9 0V27L4 25M1 21L15 15M17 8H37M27 0V15M17 17H35L22 29M21 19L36 29"/></g></svg>
<svg style="left:1709px;top:934px;" width="40" height="32" viewBox="0 0 40 32"><g stroke="#55b870" stroke-width="5" fill="none" stroke-linecap="butt" stroke-linejoin="miter" transform="translate(0,29) skewX(-10) translate(0,-29)"><path d="M2 11H34M17 0V29M16 13L3 28M19 13L34 28M24 2L29 6"/></g></svg>
<svg style="left:1746px;top:934px;" width="40" height="32" viewBox="0 0 40 32"><g stroke="#55b870" stroke-width="5" fill="none" stroke-linecap="butt" stroke-linejoin="miter" transform="translate(0,29) skewX(-10) translate(0,-29)"><path d="M8 0V4M1 8H14L3 22M8 14V29M10 16L14 20M18 12H35M26 1V27M16 27H37"/></g></svg>
<svg style="left:1781px;top:934px;" width="40" height="32" viewBox="0 0 40 32"><g stroke="#55b870" stroke-width="5" fill="none" stroke-linecap="butt" stroke-linejoin="miter" transform="translate(0,29) skewX(-10) translate(0,-29)"><path d="M34 3H3V27H36M9 8L29 23M29 8L9 23"/></g></svg>
<div style="left:0px;top:1011px;width:1920px;height:1px;background:#323232;"></div>
<div style="left:174px;top:989px;width:72px;height:22px;background:#2d2f30;"></div>
<svg style="left:34px;top:994px;" width="11" height="14" viewBox="0 0 11 14"><path d="M2 1v12M2 8q7 0 7-6" stroke="#aeb0b2" stroke-width="1.7" fill="none"/><circle cx="2" cy="2" r="1.6" fill="#aeb0b2"/><circle cx="9" cy="2" r="1.6" fill="#aeb0b2"/><circle cx="2" cy="12.5" r="1.6" fill="#aeb0b2"/></svg>
<span style="left:50px;top:995.84px;font-family:'Liberation Sans', sans-serif;font-size:12px;color:#bbbbbb;letter-spacing:-0.2px;">Subversion</span>
<svg style="left:129px;top:996px;" width="8" height="10" viewBox="0 0 8 10"><path d="M0 0L8 5L0 10z" fill="#aeb0b2"/></svg>
<span style="left:145px;top:995.84px;font-family:'Liberation Sans', sans-serif;font-size:12px;color:#bbbbbb;">Run</span>
<svg style="left:184px;top:994px;" width="14" height="15" viewBox="0 0 14 15"><path d="M4 1.5L5.3 3.5M9 1.5L7.7 3.5" stroke="#aeb0b2" stroke-width="1.2"/><circle cx="6.5" cy="4.5" r="2.3" fill="#aeb0b2"/><path d="M3 6.5h7v1.5h2v2h-2v1h2v2h-2.3a3.5 2.8 0 0 1-6.4 0H1v-2h2v-1H1v-2h2z" fill="#aeb0b2"/><circle cx="11" cy="12.5" r="2" fill="#21d121"/></svg>
<span style="left:201px;top:995.84px;font-family:'Liberation Sans', sans-serif;font-size:12px;color:#e6e6e6;">Debug</span>
<svg style="left:258px;top:996px;" width="11" height="10" viewBox="0 0 11 10"><path d="M0 1h2M0 5h2M0 9h2M3.5 1h7.5M3.5 5h7.5M3.5 9h7.5" stroke="#aeb0b2" stroke-width="1.4"/></svg>
<span style="left:273px;top:995.84px;font-family:'Liberation Sans', sans-serif;font-size:12px;color:#bbbbbb;">TODO</span>
<svg style="left:326px;top:995px;" width="11" height="11" viewBox="0 0 11 11"><circle cx="5.5" cy="5.5" r="5.5" fill="#aeb0b2"/><path d="M5.5 2.5v4M5.5 7.8v1" stroke="#3c3f41" stroke-width="1.5"/></svg>
<span style="left:342px;top:995.84px;font-family:'Liberation Sans', sans-serif;font-size:12px;color:#bbbbbb;">Problems</span>
<svg style="left:413px;top:995px;" width="11" height="11" viewBox="0 0 11 11"><rect x="0" y="0" width="11" height="11" fill="#aeb0b2"/><path d="M2 3l2.5 2L2 7M5 8.5h4" stroke="#3c3f41" stroke-width="1.2" fill="none"/></svg>
<span style="left:429px;top:995.84px;font-family:'Liberation Sans', sans-serif;font-size:12px;color:#bbbbbb;">Terminal</span>
<svg style="left:495px;top:995px;" width="11" height="12" viewBox="0 0 11 12"><path d="M5.5 0L11 3v6l-5.5 3L0 9V3z" fill="#aeb0b2"/><path d="M4 3.5l4 2.5l-4 2.5z" fill="#3c3f41"/></svg>
<span style="left:512px;top:995.84px;font-family:'Liberation Sans', sans-serif;font-size:12px;color:#bbbbbb;">Services</span>
<svg style="left:574px;top:994px;" width="12" height="14" viewBox="0 0 12 14"><path d="M8.5 2.5A5 5 0 1 0 5 11" stroke="#aeb0b2" stroke-width="1.4" fill="none"/><path d="M5 3.5v3l1.5 1" stroke="#aeb0b2" stroke-width="1.2" fill="none"/><path d="M6.5 6L12 9.5L6.5 13z" fill="#aeb0b2"/></svg>
<span style="left:591px;top:995.84px;font-family:'Liberation Sans', sans-serif;font-size:12px;color:#bbbbbb;">Profiler</span>
<svg style="left:648px;top:994px;" width="13" height="13" viewBox="0 0 13 13"><path d="M1 3.5L5 0L9 3.5L7 5.5z" fill="#aeb0b2"/><path d="M5 5l7 7l-1.5 1.5L3.5 6.5z" fill="#aeb0b2"/></svg>
<span style="left:665px;top:995.84px;font-family:'Liberation Sans', sans-serif;font-size:12px;color:#bbbbbb;">Build</span>
<svg style="left:714px;top:995px;" width="11" height="12" viewBox="0 0 11 12"><path d="M5.5 0L11 2.8L5.5 5.6L0 2.8z" fill="#aeb0b2"/><path d="M0 5.5l5.5 2.8L11 5.5M0 8.5l5.5 2.8L11 8.5" stroke="#aeb0b2" stroke-width="1.2" fill="none"/></svg>
<span style="left:731px;top:995.84px;font-family:'Liberation Sans', sans-serif;font-size:12px;color:#bbbbbb;letter-spacing:-0.2px;">Dependencies</span>
<svg style="left:12px;top:1016px;" width="12" height="12" viewBox="0 0 12 12"><rect x="2.5" y="0.5" width="9" height="9" fill="none" stroke="#9a9da0"/><path d="M0.5 2.5v9h9" stroke="#9a9da0" fill="none"/></svg>
<span style="left:39px;top:1015.00px;font-family:'Liberation Sans', sans-serif;font-size:13px;color:#bbbbbb;">Build completed successfully in 2秒255毫秒 (8 minutes ago)</span>
<svg style="left:1702px;top:1016px;" width="13" height="13" viewBox="0 0 13 13"><path d="M6.5 0v5" stroke="#5d6062" stroke-width="2"/><path d="M3 4.5H10L6.5 8Z" fill="#5d6062"/><path d="M0.7 7v5h11.6V7" stroke="#5d6062" stroke-width="1.3" fill="none"/></svg>
<span style="left:1727px;top:1015.84px;font-family:'Liberation Sans', sans-serif;font-size:12px;color:#bbbbbb;">32:38</span>
<span style="left:1770px;top:1015.84px;font-family:'Liberation Sans', sans-serif;font-size:12px;color:#bbbbbb;">LF</span>
<span style="left:1793px;top:1015.84px;font-family:'Liberation Sans', sans-serif;font-size:12px;color:#bbbbbb;">UTF-8</span>
<span style="left:1839px;top:1015.84px;font-family:'Liberation Sans', sans-serif;font-size:12px;color:#bbbbbb;">Tab*</span>
<svg style="left:1870px;top:1015px;" width="14" height="14" viewBox="0 0 14 14"><path d="M0 3.5L3.5 0V3.5z" fill="#aeb0b2"/><path d="M4.5 0H9V6H3V12H0V4.5H4.5z" fill="#aeb0b2"/><path fill-rule="evenodd" d="M2.80 1.30L3.10 0.10L4.90 0.10L5.20 1.30L5.74 1.61L6.93 1.27L7.83 2.83L6.94 3.69L6.94 4.31L7.83 5.17L6.93 6.73L5.74 6.39L5.20 6.70L4.90 7.90L3.10 7.90L2.80 6.70L2.26 6.39L1.07 6.73L0.17 5.17L1.06 4.31L1.06 3.69L0.17 2.83L1.07 1.27L2.26 1.61Z M5.3 4A1.3 1.3 0 1 0 2.7 4A1.3 1.3 0 1 0 5.3 4Z" fill="#aeb0b2" transform="translate(4.5,5)"/></svg>
<svg style="left:1894px;top:1015px;" width="14" height="14" viewBox="0 0 14 14"><path d="M2.5 6.5V3.8a2.8 2.8 0 0 1 5.6 0" stroke="#aeb0b2" stroke-width="1.5" fill="none"/><rect x="4" y="6" width="9" height="6.5" fill="#aeb0b2"/></svg>
<div style="left:0px;top:1032px;width:1920px;height:8px;background:#dde7ef;"></div>
</body></html>
